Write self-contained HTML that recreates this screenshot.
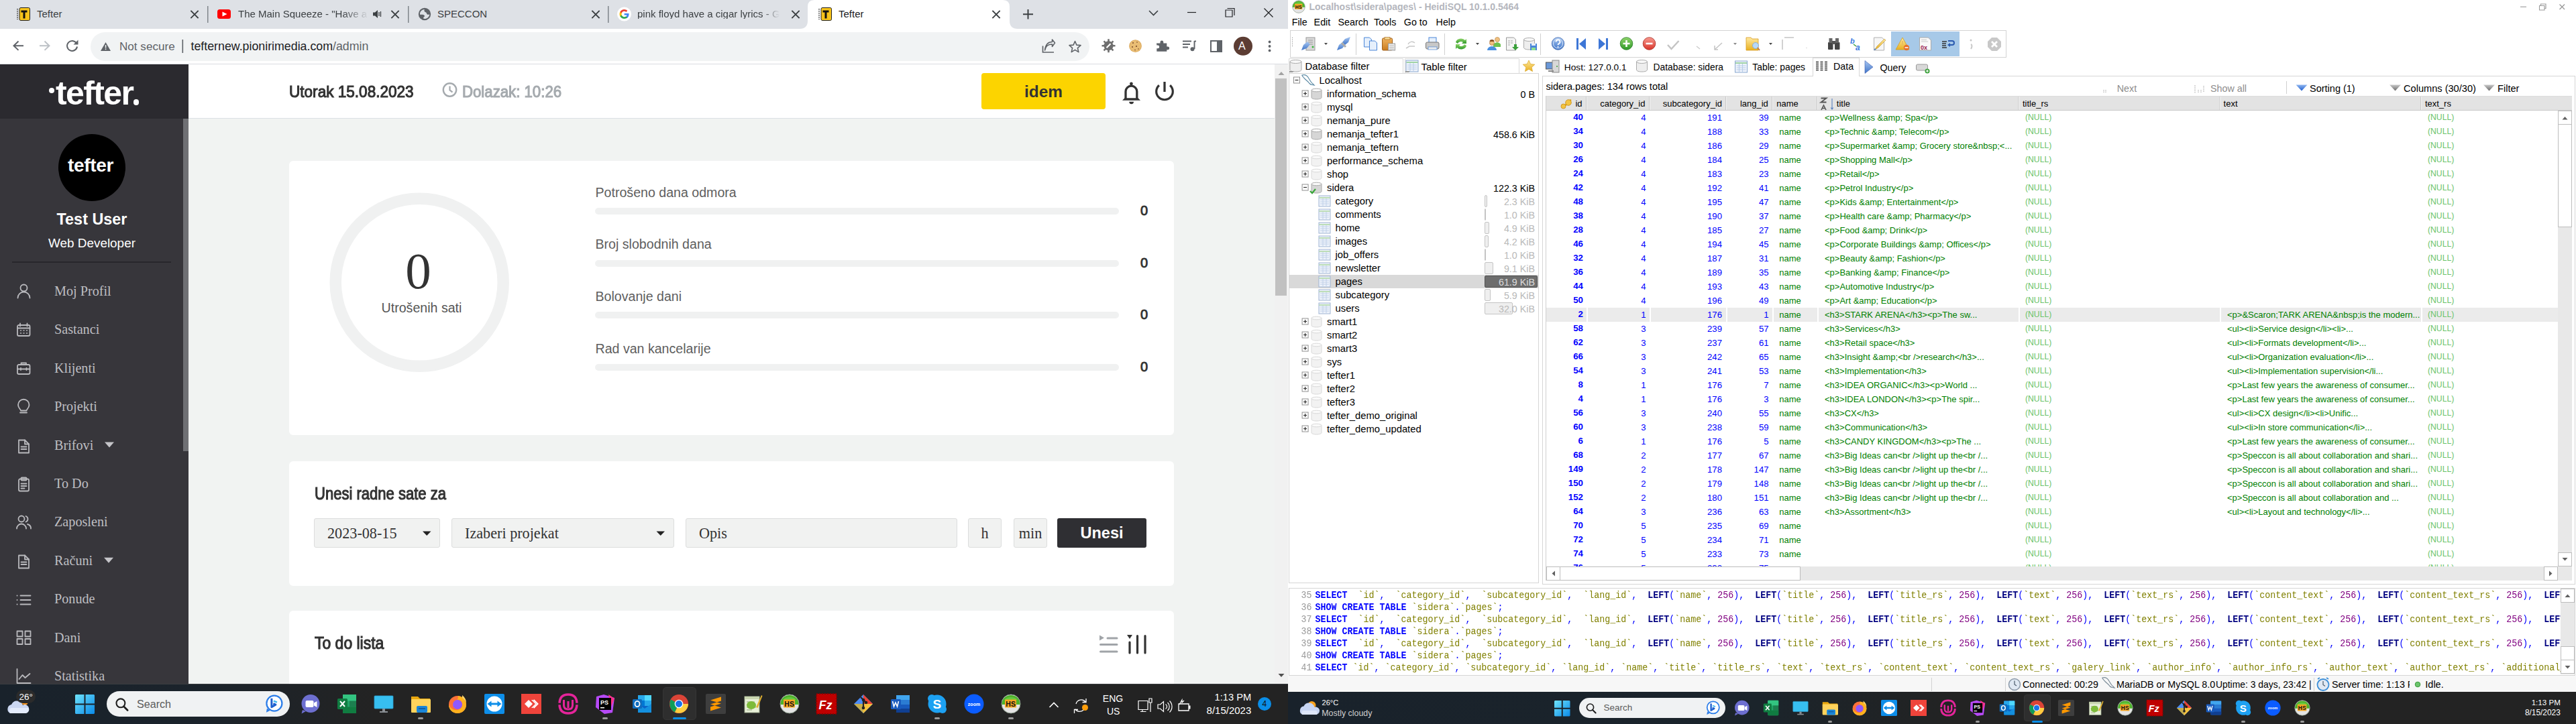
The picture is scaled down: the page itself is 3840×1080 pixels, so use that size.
<!DOCTYPE html>
<html><head><meta charset="utf-8">
<style>
*{box-sizing:border-box;margin:0;padding:0}
html,body{width:3840px;height:1080px;overflow:hidden;background:#fff}
body{position:relative;font-family:"Liberation Sans",sans-serif;color:#222}
.a{position:absolute}
.t{position:absolute;white-space:nowrap;line-height:1}
svg{position:absolute;overflow:visible}
</style></head><body>

<!-- ============ LEFT MONITOR: CHROME ============ -->
<div class="a" style="left:0px;top:0px;width:1920px;height:43px;background:#dee1e6;"></div>
<div class="a" style="left:0px;top:43px;width:1920px;height:53px;background:#fff;border-bottom:1px solid #dadce0"></div>
<div class="a" style="left:135px;top:48px;width:1489px;height:43px;background:#f1f3f4;border-radius:22px"></div>
<!-- tabs -->
<svg style="left:0;top:0" width="1920" height="43">
  <!-- active tab shape -->
  <path d="M1192 43 Q1204 43 1204 31 L1204 10 Q1204 0 1214 0 L1495 0 Q1505 0 1505 10 L1505 31 Q1505 43 1517 43 Z" fill="#fff"/>
  <!-- separators -->
  <rect x="309" y="9" width="1.5" height="25" fill="#80868b"/>
  <rect x="608" y="9" width="1.5" height="25" fill="#80868b"/>
  <rect x="906" y="9" width="1.5" height="25" fill="#80868b"/>
  <!-- close X icons -->
  <g stroke="#3c4043" stroke-width="1.8" stroke-linecap="square">
    <path d="M285 16.5 L295 26.5 M295 16.5 L285 26.5"/>
    <path d="M584 16.5 L594 26.5 M594 16.5 L584 26.5"/>
    <path d="M883 16.5 L893 26.5 M893 16.5 L883 26.5"/>
    <path d="M1181 16.5 L1191 26.5 M1191 16.5 L1181 26.5"/>
    <path d="M1480 16.5 L1490 26.5 M1490 16.5 L1480 26.5"/>
  </g>
  <!-- tefter favicons -->
  <g id="tf">
    <rect x="29" y="11.5" width="15.5" height="19" rx="2" fill="#f6c31b" stroke="#222" stroke-width="1"/>
    <path d="M26 13v16" stroke="#222" stroke-width="1.4" stroke-dasharray="1.5 1.5"/>
    <path d="M31.5 15.5h9v3h-3v9h-3v-9h-3z" fill="#111"/>
  </g>
  <use href="#tf" x="1195"/>
  <!-- youtube -->
  <rect x="324" y="14" width="20" height="14" rx="3.5" fill="#f00"/>
  <path d="M331.5 17.5 L338.5 21 L331.5 24.5Z" fill="#fff"/>
  <!-- speaker -->
  <path d="M556 18.5h3l4-3.5v12l-4-3.5h-3z" fill="#3c4043"/>
  <path d="M565 18v6M567.5 17v8" stroke="#3c4043" stroke-width="1.3"/>
  <!-- globe -->
  <circle cx="633" cy="21" r="9.2" fill="#5f6368"/>
  <path d="M626 21.8C625.6 17.5 628.5 14 632.8 13.9C631.8 15.6 632.6 17.6 634.6 18.3C636.4 19 635.6 20.8 637 21.6C638.2 22.2 639.6 21.6 640.3 21.2C640 24.6 637.6 27.2 634.6 27.9C632.6 28.2 630.8 27.6 631.1 26.4C631.4 25.4 633.2 25 632.9 23.5C632.5 22 630 21.7 626 21.8Z" fill="#dee1e6"/>
  <!-- google G -->
  <circle cx="930.5" cy="21" r="10.5" fill="#fff"/>
  <path d="M937.5 21.3c0-.5 0-1-.1-1.4h-6.8v2.7h3.9c-.2.9-.7 1.7-1.4 2.2v1.8h2.3c1.3-1.2 2.1-3 2.1-5.3z" fill="#4285f4"/>
  <path d="M930.6 28c1.9 0 3.5-.6 4.7-1.7l-2.3-1.8c-.6.4-1.4.7-2.4.7-1.8 0-3.4-1.2-3.9-2.9h-2.4v1.9c1.2 2.3 3.6 3.8 6.3 3.8z" fill="#34a853"/>
  <path d="M926.7 22.3c-.1-.4-.2-.9-.2-1.3s.1-.9.2-1.3v-1.9h-2.4c-.5 1-.8 2.1-.8 3.2s.3 2.2.8 3.2z" fill="#fbbc05"/>
  <path d="M930.6 16.8c1 0 2 .4 2.7 1.1l2-2c-1.3-1.2-3-1.9-4.7-1.9-2.7 0-5.1 1.5-6.3 3.8l2.4 1.9c.5-1.7 2.1-2.9 3.9-2.9z" fill="#ea4335"/>
  <!-- plus -->
  <path d="M1532.5 14v14.5M1525 21.25h15" stroke="#3c4043" stroke-width="2"/>
  <!-- dropdown chevron -->
  <path d="M1713 16l6.5 6.5 6.5-6.5" stroke="#3c4043" stroke-width="1.6" fill="none"/>
  <!-- minimize -->
  <path d="M1770 18.5h13" stroke="#202124" stroke-width="1.2"/>
  <!-- restore -->
  <path d="M1827 15h10v10h-10z" stroke="#202124" stroke-width="1.2" fill="none"/>
  <path d="M1829.5 12.5h10.5v10.5" stroke="#202124" stroke-width="1.2" fill="none"/>
  <!-- close -->
  <path d="M1884.5 12.5l13 13M1897.5 12.5l-13 13" stroke="#202124" stroke-width="1.3"/>
</svg>
<div class="t" style="left:55px;top:12.5px;font-size:15px;color:#3c4043">Tefter</div>
<div class="t" style="left:355px;top:12.5px;font-size:15px;color:#3c4043;width:195px;overflow:hidden;-webkit-mask-image:linear-gradient(90deg,#000 80%,transparent)">The Main Squeeze - "Have a Cigar"</div>
<div class="t" style="left:652px;top:12.5px;font-size:15px;color:#3c4043">SPECCON</div>
<div class="t" style="left:950px;top:12.5px;font-size:15px;color:#3c4043;width:212px;overflow:hidden;-webkit-mask-image:linear-gradient(90deg,#000 88%,transparent)">pink floyd have a cigar lyrics - Google Search</div>
<div class="t" style="left:1250px;top:12.5px;font-size:15px;color:#202124">Tefter</div>

<!-- toolbar icons -->
<svg style="left:0;top:43px" width="1920" height="53">
  <!-- back -->
  <path d="M35 25.2H21.5M27.5 18.5l-7 6.7 7 6.7" stroke="#5f6368" stroke-width="2" fill="none"/>
  <!-- forward -->
  <path d="M59 25.2h13.5M66.5 18.5l7 6.7-7 6.7" stroke="#bdc1c6" stroke-width="2" fill="none"/>
  <!-- reload -->
  <path d="M114 21.5a7.5 7.5 0 1 0 1 5" stroke="#5f6368" stroke-width="2" fill="none"/>
  <path d="M116.5 16.5v7h-7z" fill="#5f6368"/>
  <!-- warning -->
  <path d="M157.5 20L165 33H150Z" fill="#5f6368"/>
  <rect x="156.8" y="24" width="1.5" height="4.5" fill="#f1f3f4"/>
  <rect x="156.8" y="29.5" width="1.5" height="1.6" fill="#f1f3f4"/>
  <rect x="271.5" y="16" width="1.6" height="20" fill="#5f6368"/>
  <!-- share -->
  <path d="M1554.5 25.5v9.5h16.5" stroke="#5f6368" stroke-width="1.7" fill="none"/>
  <path d="M1557.5 32c1-6 5-9 11-9v3.5l4-5.5-4-5v3.5c-6 0-10 4-11 12.5z" stroke="#5f6368" stroke-width="1.6" fill="none" stroke-linejoin="round"/>
  <!-- star -->
  <path d="M1602.5 18.5l2.4 5.6 6.1.5-4.6 4 1.4 6-5.3-3.2-5.3 3.2 1.4-6-4.6-4 6.1-.5z" stroke="#5f6368" stroke-width="1.6" fill="none" stroke-linejoin="round"/>
  <!-- bug/gear ext -->
  <g transform="translate(1652.5 25.3)">
    <circle r="7" fill="#6e6e6e"/>
    <g stroke="#6e6e6e" stroke-width="2.6">
      <path d="M0 -10v20M-10 0h20M-7 -7l14 14M7 -7l-14 14"/>
    </g>
    <path d="M-3 3l6-6" stroke="#fff" stroke-width="2.2"/>
  </g>
  <!-- cookie -->
  <circle cx="1692.5" cy="25.7" r="9.4" fill="#dcaa5f"/>
  <circle cx="1692.5" cy="25.7" r="8.4" fill="#e9bd74"/>
  <g fill="#6b3b1f"><circle cx="1689" cy="21" r=".9"/><circle cx="1695" cy="20" r=".8"/><circle cx="1688" cy="27" r=".9"/><circle cx="1694" cy="26" r="1"/><circle cx="1697" cy="30" r=".8"/><circle cx="1692" cy="31.5" r=".8"/></g>
  <!-- puzzle -->
  <path d="M1724 21.5h5.5v-1.5a2.4 2.4 0 0 1 4.8 0v1.5h5v5h1.5a2.4 2.4 0 0 1 0 4.8h-1.5v2.5h-15v-4.5h1.5a2.4 2.4 0 0 0 0-4.8h-1.5z" fill="#5f6368"/>
  <!-- media -->
  <g stroke="#5f6368" stroke-width="1.9"><path d="M1763 18.5h13M1763 23h11M1763 27.5h8M1780.5 18v12"/></g>
  <path d="M1780.5 18.5h2.5" stroke="#5f6368" stroke-width="1.9"/>
  <circle cx="1777.5" cy="30.3" r="3" fill="#5f6368"/>
  <!-- side panel -->
  <rect x="1805" y="18" width="16" height="16" fill="none" stroke="#5f6368" stroke-width="2"/>
  <rect x="1814" y="18" width="7" height="16" fill="#5f6368"/>
  <!-- avatar -->
  <circle cx="1853" cy="25.8" r="14" fill="#5c3d33"/>
  <!-- kebab -->
  <circle cx="1892.6" cy="19.5" r="1.9" fill="#5f6368"/><circle cx="1892.6" cy="26" r="1.9" fill="#5f6368"/><circle cx="1892.6" cy="32.4" r="1.9" fill="#5f6368"/>
</svg>
<div class="t" style="left:1846px;top:61px;font-size:16px;color:#fff">A</div>
<div class="t" style="left:178px;top:61px;font-size:17.1px;color:#5f6368">Not secure</div>
<div class="t" style="left:284.5px;top:61px;font-size:17.8px;color:#202124">tefternew.pionirimedia.com<span style="color:#5f6368">/admin</span></div>

<!-- sidebar -->
<div class="a" style="left:0px;top:96px;width:281px;height:81px;background:#2b2a2f;"></div>
<div class="a" style="left:0px;top:177px;width:281px;height:843px;background:#37363b;"></div>
<div class="a" style="left:273px;top:177px;width:8px;height:496px;background:#6f7074;"></div>
<div class="t" style="top:114.17px;font-size:50px;color:#fff;font-weight:bold;left:73.00px;letter-spacing:-1.6px;"><span style="display:inline-block;width:8px;height:8px;border-radius:50%;background:#fff;vertical-align:17px;margin-right:2px"></span>tefter</div>
<div class="a" style="left:198.5px;top:148px;width:8.5px;height:8.5px;background:#fff;border-radius:50%"></div>
<div class="a" style="left:87px;top:200px;width:100px;height:100px;background:#000;border-radius:50%"></div>
<div class="t" style="top:233.30px;font-size:28px;color:#fff;font-weight:bold;left:101.00px;letter-spacing:-0.3px;">tefter</div>
<div class="t" style="top:316.19px;font-size:23.4px;color:#fff;font-weight:bold;left:137.00px;transform:translateX(-50%);">Test User</div>
<div class="t" style="top:353.50px;font-size:18.9px;color:#fff;left:137.00px;transform:translateX(-50%);">Web Developer</div>
<div class="a" style="left:18px;top:390px;width:237px;height:2px;background:#28272b;"></div>
<div class="t" style="top:423.78px;font-size:20.2px;color:#bebec2;font-family:'Liberation Serif',serif;left:81.00px;">Moj Profil</div>
<div class="t" style="top:481.23px;font-size:20.2px;color:#bebec2;font-family:'Liberation Serif',serif;left:81.00px;">Sastanci</div>
<div class="t" style="top:538.68px;font-size:20.2px;color:#bebec2;font-family:'Liberation Serif',serif;left:81.00px;">Klijenti</div>
<div class="t" style="top:596.13px;font-size:20.2px;color:#bebec2;font-family:'Liberation Serif',serif;left:81.00px;">Projekti</div>
<div class="t" style="top:653.58px;font-size:20.2px;color:#bebec2;font-family:'Liberation Serif',serif;left:81.00px;">Brifovi</div>
<div class="t" style="top:711.03px;font-size:20.2px;color:#bebec2;font-family:'Liberation Serif',serif;left:81.00px;">To Do</div>
<div class="t" style="top:768.48px;font-size:20.2px;color:#bebec2;font-family:'Liberation Serif',serif;left:81.00px;">Zaposleni</div>
<div class="t" style="top:825.93px;font-size:20.2px;color:#bebec2;font-family:'Liberation Serif',serif;left:81.00px;">Računi</div>
<div class="t" style="top:883.38px;font-size:20.2px;color:#bebec2;font-family:'Liberation Serif',serif;left:81.00px;">Ponude</div>
<div class="t" style="top:940.83px;font-size:20.2px;color:#bebec2;font-family:'Liberation Serif',serif;left:81.00px;">Dani</div>
<div class="t" style="top:998.28px;font-size:20.2px;color:#bebec2;font-family:'Liberation Serif',serif;left:81.00px;">Statistika</div>
<svg style="left:0;top:0" width="1" height="1"><path d="M156 659.5h14l-7 8z" fill="#c5c5c9"/></svg>
<svg style="left:0;top:0" width="1" height="1"><path d="M155 831.85h14l-7 8z" fill="#c5c5c9"/></svg>
<svg style="left:0;top:424.0px" width="60" height="24"><g fill="none" stroke="#b9b9bd" stroke-width="1.8" stroke-linecap="round" stroke-linejoin="round"><circle cx="35.5" cy="5.5" r="5"/><path d="M26.5 20.5a9 9 0 0 1 18 0"/></g></svg>
<svg style="left:0;top:481.4px" width="60" height="24"><g fill="none" stroke="#b9b9bd" stroke-width="1.8" stroke-linecap="round" stroke-linejoin="round"><rect x="26" y="4" width="18.5" height="16" rx="2"/><path d="M26 8.5h18.5M30 1.5v4M40.5 1.5v4"/><g stroke-width="1.5"><path d="M30.5 12h1M35 12h1M39.5 12h1M30.5 16h1M35 16h1M39.5 16h1"/></g></g></svg>
<svg style="left:0;top:538.9px" width="60" height="24"><g fill="none" stroke="#b9b9bd" stroke-width="1.8" stroke-linecap="round" stroke-linejoin="round"><rect x="26" y="5" width="18.5" height="14" rx="2"/><path d="M31.5 5V2.5h7.5V5M26 11.5h18.5M31 10v3M39.5 10v3"/></g></svg>
<svg style="left:0;top:596.4px" width="60" height="24"><g fill="none" stroke="#b9b9bd" stroke-width="1.8" stroke-linecap="round" stroke-linejoin="round"><path d="M30 19.5h10M31 16.5c0-2-4-4-4-8.5a8.2 8.2 0 0 1 16.5 0c0 4.5-4 6.5-4 8.5z"/></g></svg>
<svg style="left:0;top:653.8px" width="60" height="24"><g fill="none" stroke="#b9b9bd" stroke-width="1.8" stroke-linecap="round" stroke-linejoin="round"><path d="M28 2.5h9l6 6v13h-15z"/><path d="M37 2.5v6h6M31.5 12.5h8M31.5 16h8"/></g></svg>
<svg style="left:0;top:711.2px" width="60" height="24"><g fill="none" stroke="#b9b9bd" stroke-width="1.8" stroke-linecap="round" stroke-linejoin="round"><rect x="28" y="3.5" width="15" height="18" rx="2"/><rect x="31.5" y="1.5" width="8" height="4" rx="1"/><path d="M31.5 10.5h8M31.5 14h8M31.5 17.5h5"/></g></svg>
<svg style="left:0;top:768.7px" width="60" height="24"><g fill="none" stroke="#b9b9bd" stroke-width="1.8" stroke-linecap="round" stroke-linejoin="round"><circle cx="32" cy="5" r="4.5"/><path d="M25 19.5a7 7 0 0 1 14 0M38.5 1a4.5 4.5 0 0 1 0 8.5M41 13a6.5 6.5 0 0 1 5 6.5"/></g></svg>
<svg style="left:0;top:826.2px" width="60" height="24"><g fill="none" stroke="#b9b9bd" stroke-width="1.8" stroke-linecap="round" stroke-linejoin="round"><path d="M28 2.5h9l6 6v13h-15z"/><path d="M37 2.5v6h6M31.5 12.5h8M31.5 16h8"/></g></svg>
<svg style="left:0;top:883.6px" width="60" height="24"><g fill="none" stroke="#b9b9bd" stroke-width="1.8" stroke-linecap="round" stroke-linejoin="round"><path d="M30.5 4.5h15M30.5 11h15M30.5 17.5h15M25.5 4.5h.1M25.5 11h.1M25.5 17.5h.1"/></g></svg>
<svg style="left:0;top:941.1px" width="60" height="24"><g fill="none" stroke="#b9b9bd" stroke-width="1.8" stroke-linecap="round" stroke-linejoin="round"><rect x="25.5" y="0.5" width="8" height="8"/><rect x="37.5" y="0.5" width="8" height="8"/><rect x="25.5" y="12" width="8" height="8"/><rect x="37.5" y="12" width="8" height="8"/></g></svg>
<svg style="left:0;top:998.5px" width="60" height="24"><g fill="none" stroke="#b9b9bd" stroke-width="1.8" stroke-linecap="round" stroke-linejoin="round"><path d="M25.5 -1v21h20M28.5 14l5-6 4 4 7-6"/></g></svg>
<!-- content -->
<div class="a" style="left:281px;top:96px;width:1619px;height:80px;background:#fff;"></div>
<div class="a" style="left:281px;top:176px;width:1619px;height:1px;background:#dce0e4;"></div>
<div class="a" style="left:281px;top:177px;width:1619px;height:843px;background:#f1f3f2;"></div>
<div class="t" style="top:124.76px;font-size:24.5px;color:#333;left:431.00px;transform:scaleX(0.921);transform-origin:left;-webkit-text-stroke:1.1px #333;">Utorak 15.08.2023</div>
<svg style="left:659px;top:122px" width="24" height="24"><circle cx="11.5" cy="12" r="9.7" fill="none" stroke="#a5aaae" stroke-width="2.4"/><path d="M11.5 6.5v6l4 3" fill="none" stroke="#a5aaae" stroke-width="2.2"/></svg>
<div class="t" style="top:124.76px;font-size:24.5px;color:#a5aaae;left:688.50px;transform:scaleX(0.906);transform-origin:left;-webkit-text-stroke:1.1px #a5aaae;">Dolazak: 10:26</div>
<div class="a" style="left:1463px;top:109px;width:185px;height:54px;background:#fcd400;border-radius:4px"></div>
<div class="t" style="top:124.85px;font-size:24.4px;color:#333;font-weight:bold;left:1555.50px;transform:translateX(-50%);">idem</div>
<svg style="left:0;top:0" width="1" height="1"><circle cx="1686.4" cy="125" r="2.4" fill="#333"/><path d="M1678 147.5V136.5a8.4 8.4 0 0 1 16.8 0V147.5" fill="none" stroke="#333" stroke-width="3.3"/><path d="M1673 149.8h27l-3.5-3.5h-20z" fill="#333"/><path d="M1683.2 151.8h6.8a3.4 3.4 0 0 1 -6.8 0z" fill="#333"/><path d="M1736 122v15" stroke="#333" stroke-width="3.3"/><path d="M1727.9 127.2a12.3 12.3 0 1 0 16.2 0" fill="none" stroke="#333" stroke-width="3.2"/></svg>
<div class="a" style="left:431px;top:240px;width:1319px;height:409px;background:#fff;border-radius:6px"></div>
<svg style="left:0;top:0" width="1" height="1"><circle cx="625.2" cy="421.3" r="125" fill="none" stroke="#f0f1f1" stroke-width="17.5"/></svg>
<div class="t" style="top:365.51px;font-size:77px;color:#333;font-family:'Liberation Serif',serif;left:623.50px;transform:translateX(-50%);">0</div>
<div class="t" style="top:450.41px;font-size:19.6px;color:#555;left:628.50px;transform:translateX(-50%);">Utrošenih sati</div>
<div class="t" style="top:277.81px;font-size:19.6px;color:#5e5e5e;left:887.50px;">Potrošeno dana odmora</div>
<div class="a" style="left:887px;top:310px;width:781px;height:10px;background:#f0f1f1;border-radius:5px"></div>
<div class="t" style="top:304.07px;font-size:20px;color:#333;left:1705.50px;transform:translateX(-50%);-webkit-text-stroke:0.9px #333;">0</div>
<div class="t" style="top:355.41px;font-size:19.6px;color:#5e5e5e;left:887.50px;">Broj slobodnih dana</div>
<div class="a" style="left:887px;top:388px;width:781px;height:10px;background:#f0f1f1;border-radius:5px"></div>
<div class="t" style="top:381.67px;font-size:20px;color:#333;left:1705.50px;transform:translateX(-50%);-webkit-text-stroke:0.9px #333;">0</div>
<div class="t" style="top:433.01px;font-size:19.6px;color:#5e5e5e;left:887.50px;">Bolovanje dani</div>
<div class="a" style="left:887px;top:465px;width:781px;height:10px;background:#f0f1f1;border-radius:5px"></div>
<div class="t" style="top:459.27px;font-size:20px;color:#333;left:1705.50px;transform:translateX(-50%);-webkit-text-stroke:0.9px #333;">0</div>
<div class="t" style="top:510.61px;font-size:19.6px;color:#5e5e5e;left:887.50px;">Rad van kancelarije</div>
<div class="a" style="left:887px;top:543px;width:781px;height:10px;background:#f0f1f1;border-radius:5px"></div>
<div class="t" style="top:536.87px;font-size:20px;color:#333;left:1705.50px;transform:translateX(-50%);-webkit-text-stroke:0.9px #333;">0</div>
<div class="a" style="left:431px;top:688px;width:1319px;height:186px;background:#fff;border-radius:6px"></div>
<div class="t" style="top:723.84px;font-size:25px;color:#333;left:468.80px;transform:scaleX(0.881);transform-origin:left;-webkit-text-stroke:1.1px #333;">Unesi radne sate za</div>
<div class="a" style="left:468px;top:773px;width:188px;height:44px;background:#f1f2f1;border:1px solid #dcdddd;border-radius:3px"></div>
<div class="t" style="top:785.41px;font-size:22.2px;color:#333;font-family:'Liberation Serif',serif;left:488.00px;">2023-08-15</div>
<svg style="left:0;top:0" width="1" height="1"><path d="M630 792.5h12.5l-6.25 6.5z" fill="#222"/></svg>
<div class="a" style="left:673px;top:773px;width:332px;height:44px;background:#f1f2f1;border:1px solid #dcdddd;border-radius:3px"></div>
<div class="t" style="top:785.41px;font-size:22.2px;color:#333;font-family:'Liberation Serif',serif;left:693.00px;">Izaberi projekat</div>
<svg style="left:0;top:0" width="1" height="1"><path d="M978.5 792.5h12.5l-6.25 6.5z" fill="#222"/></svg>
<div class="a" style="left:1022px;top:773px;width:405px;height:44px;background:#f1f2f1;border:1px solid #dcdddd;border-radius:3px"></div>
<div class="t" style="top:785.41px;font-size:22.2px;color:#333;font-family:'Liberation Serif',serif;left:1042.00px;">Opis</div>
<div class="a" style="left:1443px;top:773px;width:50px;height:44px;background:#f1f2f1;border:1px solid #dcdddd;border-radius:3px"></div>
<div class="t" style="top:785.41px;font-size:22.2px;color:#333;font-family:'Liberation Serif',serif;left:1468.00px;transform:translateX(-50%);">h</div>
<div class="a" style="left:1511px;top:773px;width:50px;height:44px;background:#f1f2f1;border:1px solid #dcdddd;border-radius:3px"></div>
<div class="t" style="top:785.41px;font-size:22.2px;color:#333;font-family:'Liberation Serif',serif;left:1536.00px;transform:translateX(-50%);">min</div>
<div class="a" style="left:1576px;top:773px;width:133px;height:44px;background:#2f2f33;border-radius:3px"></div>
<div class="t" style="top:784.41px;font-size:23.5px;color:#fff;font-weight:bold;left:1642.50px;transform:translateX(-50%);">Unesi</div>
<div class="a" style="left:431px;top:911px;width:1319px;height:120px;background:#fff;border-radius:6px"></div>
<div class="t" style="top:947.44px;font-size:25px;color:#333;left:468.80px;transform:scaleX(0.918);transform-origin:left;-webkit-text-stroke:1.1px #333;">To do lista</div>
<svg style="left:1638px;top:946px" width="80" height="32"><path d="M1 1.5l7 4-7 4z" fill="#a0a4a8"/><g stroke="#a0a4a8" stroke-width="3" stroke-linecap="round"><path d="M13 6h14M2.5 15.5h24.5M2.5 26h24.5"/></g><path d="M42 1h8l-4 6z" fill="#333"/><g stroke="#333" stroke-width="3.2" stroke-linecap="round"><path d="M46 12v16M57.5 2.5v25.5M69 2.5v25.5"/></g></svg>
<div class="a" style="left:1900px;top:96px;width:20px;height:924px;background:#f1f1f1;"></div>
<div class="a" style="left:1901px;top:117px;width:17px;height:324px;background:#c1c1c1;"></div>
<svg style="left:0;top:0" width="1" height="1"><path d="M1905.5 112h9l-4.5-5z" fill="#a3a3a3"/><path d="M1905.5 1005h9l-4.5 5z" fill="#505050"/></svg>
<!-- taskbar left -->
<div class="a" style="left:0px;top:1020px;width:1920px;height:60px;background:linear-gradient(90deg,#19222b 0,#1b232b 300px,#232323 560px,#232323 100%);"></div>
<div class="a" style="left:0px;top:1020px;width:1920px;height:1px;background:#3a3d40;"></div>
<svg style="left:0;top:1020px" width="60" height="60"><circle cx="37" cy="27" r="5" fill="#f7941d"/><path d="M15 44a7 7 0 0 1 2-13 9 9 0 0 1 17 1 6 6 0 0 1 9 6 6 6 0 0 1-5 6z" fill="#cbd7f2"/><path d="M15 44a7 7 0 0 1 1-8h27a6 6 0 0 1-5 8z" fill="#e3ebfb"/></svg>
<div class="a" style="left:24px;top:1029px;width:29px;height:20px;background:#2b2b2b;border-radius:10px"></div>
<div class="t" style="top:1032.87px;font-size:13.5px;color:#fff;left:28.50px;">26°</div>
<svg style="left:112px;top:1036px" width="29" height="29"><defs><linearGradient id="wg112" x1="0" y1="0" x2="1" y2="1"><stop offset="0" stop-color="#6ee3fb"/><stop offset="1" stop-color="#0b8ae8"/></linearGradient></defs><path d="M1 0h12.5v13.5H0V1z M15.5 0h12.5l1 1v12.5h-13.5z M0 15.5h13.5v13.5H1l-1-1z M15.5 15.5h13.5v12.5l-1 1h-12.5z" fill="url(#wg112)"/></svg>
<div class="a" style="left:159px;top:1031px;width:273px;height:38px;border-radius:19.0px;background:#f0f2f3"></div>
<svg style="left:159px;top:1031px" width="273" height="38"><circle cx="20.900000000000002" cy="17.86" r="6.460000000000001" fill="none" stroke="#1f1f1f" stroke-width="2.09"/><path d="M25.46 22.8l5.7 5.7" stroke="#1f1f1f" stroke-width="2.66" stroke-linecap="round"/><g transform="translate(236.9 5.7) scale(1.0)"><circle cx="13" cy="12.5" r="11.5" fill="#fff" stroke="#2b7de9" stroke-width="2.2"/><path d="M2 20l-1 6 6-3" fill="#2b7de9"/><path d="M9 5v13l6-3.5-3.5-1.5" fill="none" stroke="#1d5fcf" stroke-width="3" stroke-linejoin="round"/><path d="M12 9l5 2" stroke="#3fb8f0" stroke-width="2.5"/></g></svg>
<div class="t" style="left:204px;top:1042.0px;font-size:16.1px;color:#5b5b5b">Search</div>
<div class="a" style="left:988px;top:1025px;width:50px;height:49px;background:#2e2e2e;border-radius:5px;border:1px solid #363636"></div>
<svg style="left:447.0px;top:1035px" width="30" height="30"><g transform="scale(1.0000)"><circle cx="16" cy="14.5" r="13.5" fill="#6d6fd0"/><path d="M4 24 L2.5 29.5 L9 26Z" fill="#6d6fd0"/><rect x="8.5" y="10" width="12" height="10" rx="2" fill="#fff"/><path d="M21 13.5l4.5-2.5v9l-4.5-2.5z" fill="#fff"/></g></svg>
<svg style="left:502.0px;top:1035px" width="30" height="30"><g transform="scale(1.0000)"><rect x="9" y="1" width="20" height="28" rx="2" fill="#21a366"/><rect x="9" y="1" width="20" height="9.5" fill="#33c481"/><rect x="9" y="19.5" width="20" height="9.5" fill="#107c41"/><rect x="19" y="10.5" width="10" height="9" fill="#185c37" opacity=".5"/><rect x="1" y="7" width="15" height="16" rx="1.5" fill="#107c41"/><path d="M5 11l7 8M12 11l-7 8" stroke="#fff" stroke-width="2"/></g></svg>
<svg style="left:557.0px;top:1035px" width="30" height="30"><g transform="scale(1.0000)"><rect x="1" y="3" width="28" height="19" rx="1" fill="#37bff0"/><rect x="1" y="3" width="28" height="19" rx="1" fill="none" stroke="#2a9fd0" stroke-width=".8"/><rect x="13" y="22" width="4" height="4" fill="#8a8f94"/><rect x="9" y="26" width="12" height="2" fill="#8a8f94"/></g></svg>
<svg style="left:612.0px;top:1035px" width="30" height="30"><g transform="scale(1.0000)"><path d="M1 4h10l3 3h15v20H1z" fill="#e8a70e"/><rect x="1" y="8" width="29" height="20" rx="1" fill="#ffd35c"/><rect x="9" y="18" width="16" height="10" rx="2" fill="#1a86d8"/><rect x="12" y="21" width="10" height="2" fill="#0f5fa8"/></g></svg>
<svg style="left:667.0px;top:1035px" width="30" height="30"><g transform="scale(1.0000)"><circle cx="15" cy="16" r="13" fill="#ff7139"/><path d="M15 3c6 0 13 5 13 13S22 29 15 29C8 29 2 24 2 16c2 6 8 9 13 8 5-1 8-5 7-10-1-4-5-6-8-5 3-3 2-6 1-6z" fill="#ffb21e"/><circle cx="15" cy="16" r="7" fill="#9059ff"/><path d="M22 2c4 3 6 7 6 11-2-4-4-6-6-7z" fill="#ffd567"/></g></svg>
<svg style="left:722.0px;top:1035px" width="30" height="30"><g transform="scale(1.0000)"><rect x="0" y="0" width="30" height="30" rx="2" fill="#0e8ee9"/><circle cx="15" cy="15" r="11.5" fill="#fff"/><path d="M4.5 15l6-4.5v3h9v-3l6 4.5-6 4.5v-3h-9v3z" fill="#0e8ee9"/></g></svg>
<svg style="left:777.0px;top:1035px" width="30" height="30"><g transform="scale(1.0000)"><rect x="0" y="0" width="30" height="30" fill="#ef443b"/><path d="M5 15l6-6 6 6-6 6z" fill="#fff"/><path d="M15 9l6 6-6 6 2 0 6-6-6-6z" fill="#fff"/><path d="M18.5 9l6 6-6 6" fill="none" stroke="#fff" stroke-width="2"/></g></svg>
<svg style="left:832.0px;top:1035px" width="30" height="30"><g transform="scale(1.0000)"><path d="M15 1c8 0 13 4 13 14s-5 14-13 14S2 25 2 15 7 1 15 1z" fill="none" stroke="#e5249a" stroke-width="3.5"/><path d="M8.5 9v8c0 4 2.5 6 6.5 6s6.5-2 6.5-6V9M15 11v10" fill="none" stroke="#e5249a" stroke-width="3"/><path d="M0 15h6M24 15h6" stroke="#232323" stroke-width="2.5"/></g></svg>
<svg style="left:887.0px;top:1035px" width="30" height="30"><g transform="scale(1.0000)"><path d="M2 4l11-3 16 5-3 22-12 2L1 20z" fill="#b74af7"/><path d="M20 1l9 6-5 12z" fill="#ff318c"/><rect x="6" y="6" width="18" height="18" fill="#000"/><text x="8" y="16" font-family="Liberation Sans" font-weight="bold" font-size="9" fill="#fff">PS</text><rect x="8" y="20" width="6" height="1.5" fill="#fff"/></g></svg>
<svg style="left:942.0px;top:1035px" width="30" height="30"><g transform="scale(1.0000)"><rect x="9" y="2" width="20" height="26" rx="2" fill="#0a64c8"/><rect x="9" y="2" width="20" height="8" fill="#28a8ea"/><rect x="19" y="2" width="10" height="8" fill="#50d9ff"/><rect x="9" y="10" width="10" height="8" fill="#0078d4"/><rect x="19" y="10" width="10" height="8" fill="#28a8ea"/><path d="M9 15l10 7 10-7v13H9z" fill="#1490df"/><rect x="1" y="8" width="14" height="14" rx="1.5" fill="#0f6cbd"/><ellipse cx="8" cy="15" rx="3.5" ry="4.2" fill="none" stroke="#fff" stroke-width="1.8"/></g></svg>
<svg style="left:997.0px;top:1035px" width="30" height="30"><g transform="scale(1.0000)"><circle cx="15" cy="15" r="14" fill="#db4437"/><path d="M15 15L3 8.5A14 14 0 0 0 9 27.5z" fill="#0f9d58"/><path d="M15 15h14A14 14 0 0 1 9 27.5z" fill="#ffcd40"/><path d="M15 15L3 8.5" stroke="#0f9d58" stroke-width="0"/><circle cx="15" cy="15" r="6.3" fill="#fff"/><circle cx="15" cy="15" r="5" fill="#1a73e8"/></g></svg>
<svg style="left:1052.0px;top:1035px" width="30" height="30"><g transform="scale(1.0000)"><rect x="0" y="0" width="30" height="30" rx="2" fill="#3e3e3e"/><path d="M7 9.5l16-5v6l-16 5z M7 15.5l16 5v-6l-16-5z M7 19.5l16-5v6l-16 5z" fill="#ff9800"/></g></svg>
<svg style="left:1107.0px;top:1035px" width="30" height="30"><g transform="scale(1.0000)"><rect x="3" y="4" width="22" height="24" fill="#e8f0d8" stroke="#9aa58a" stroke-width="1"/><path d="M3 4h22v4H3z" fill="#c9d6b0"/><path d="M6 12h12M6 16h10M6 20h14M6 24h8" stroke="#8fa37a" stroke-width="1"/><ellipse cx="13" cy="17" rx="7" ry="6" fill="#7dbb3a"/><path d="M20 20L28 2l1.5 1-7 18z" fill="#e0b030"/></g></svg>
<svg style="left:1162.0px;top:1035px" width="30" height="30"><g transform="scale(1.0000)"><circle cx="15" cy="15" r="14" fill="#e4e4e4"/><path d="M1 16a14 14 0 0 1 28 0z" fill="#4db32b"/><path d="M5 9a12 9 0 0 1 20 0" fill="#7dd850" opacity=".6"/><circle cx="15" cy="15" r="14" fill="none" stroke="#8a9a8a" stroke-width="1"/><rect x="6" y="8.5" width="17" height="12" rx="1" fill="#f5a623"/><text x="7.3" y="18.8" font-family="Liberation Sans" font-weight="bold" font-size="10.5" fill="#111">HS</text></g></svg>
<svg style="left:1217.0px;top:1035px" width="30" height="30"><g transform="scale(1.0000)"><rect x="0" y="0" width="30" height="30" fill="#bf0000"/><path d="M0 0h30v30H0z" fill="none" stroke="#8b0000" stroke-width="2" stroke-dasharray="2 2"/><text x="3.5" y="23" font-family="Liberation Sans" font-weight="bold" font-style="italic" font-size="18" fill="#fff">Fz</text></g></svg>
<svg style="left:1272.0px;top:1035px" width="30" height="30"><g transform="scale(1.0000)"><path d="M15 1l14 14-14 14L1 15z" fill="#4b8bf5"/><path d="M15 15h14L15 29z" fill="#f7c23c"/><path d="M15 1l14 14H15z" fill="#ea4335"/><path d="M1 15h14v14z" fill="#fbbc04" opacity=".7"/><path d="M11 5l8 8M15 9v12" stroke="#222" stroke-width="2.2"/><circle cx="15" cy="9" r="2.3" fill="#222"/><circle cx="19" cy="13" r="2.3" fill="#222"/><circle cx="15" cy="21" r="2.3" fill="#222"/></g></svg>
<svg style="left:1327.0px;top:1035px" width="30" height="30"><g transform="scale(1.0000)"><rect x="9" y="2" width="20" height="26" rx="2" fill="#185abd"/><rect x="9" y="2" width="20" height="7" fill="#41a5ee"/><rect x="9" y="9" width="20" height="7" fill="#2b7cd3"/><rect x="9" y="22" width="20" height="6" fill="#103f91"/><rect x="1" y="8" width="15" height="15" rx="1.5" fill="#185abd"/><path d="M3.5 11l2 8 2.5-6 2.5 6 2-8" fill="none" stroke="#fff" stroke-width="1.6"/></g></svg>
<svg style="left:1382.0px;top:1035px" width="30" height="30"><g transform="scale(1.0000)"><circle cx="15" cy="15" r="13.5" fill="#1da1f2"/><circle cx="7" cy="7" r="6" fill="#1da1f2"/><circle cx="23" cy="23" r="6" fill="#1da1f2"/><text x="8.5" y="22" font-family="Liberation Sans" font-weight="bold" font-size="19" fill="#fff">S</text></g></svg>
<svg style="left:1437.0px;top:1035px" width="30" height="30"><g transform="scale(1.0000)"><circle cx="15" cy="15" r="14.5" fill="#0b5cff"/><text x="15" y="17.5" text-anchor="middle" font-family="Liberation Sans" font-weight="bold" font-size="7" fill="#fff">zoom</text></g></svg>
<svg style="left:1492.0px;top:1035px" width="30" height="30"><g transform="scale(1.0000)"><circle cx="15" cy="15" r="14" fill="#e4e4e4"/><path d="M1 16a14 14 0 0 1 28 0z" fill="#4db32b"/><path d="M5 9a12 9 0 0 1 20 0" fill="#7dd850" opacity=".6"/><circle cx="15" cy="15" r="14" fill="none" stroke="#8a9a8a" stroke-width="1"/><rect x="6" y="8.5" width="17" height="12" rx="1" fill="#f5a623"/><text x="7.3" y="18.8" font-family="Liberation Sans" font-weight="bold" font-size="10.5" fill="#111">HS</text></g></svg>
<div class="a" style="left:623px;top:1070px;width:8px;height:3px;background:#9a9a9a;border-radius:2px"></div>
<div class="a" style="left:898px;top:1070px;width:8px;height:3px;background:#9a9a9a;border-radius:2px"></div>
<div class="a" style="left:1393px;top:1070px;width:8px;height:3px;background:#9a9a9a;border-radius:2px"></div>
<div class="a" style="left:1503px;top:1070px;width:8px;height:3px;background:#9a9a9a;border-radius:2px"></div>
<div class="a" style="left:1003px;top:1070px;width:20px;height:3px;background:#0a8ee8;border-radius:2px"></div>
<svg style="left:0;top:1020px" width="1920" height="60"><path d="M1564.5 35l6.5-6.5 6.5 6.5" fill="none" stroke="#fff" stroke-width="1.6"/><path d="M1618 27a8 8 0 0 0-14 3M1603 38a8 8 0 0 0 14-2" fill="none" stroke="#fff" stroke-width="1.3"/><path d="M1619 22v5.5h-5.5" fill="none" stroke="#fff" stroke-width="1.3"/><path d="M1601.5 44v-5.5h5.5" fill="none" stroke="#fff" stroke-width="1.3"/><circle cx="1617.5" cy="35.5" r="4.5" fill="#ff9d0a"/><path d="M1697 25.5h14v13h-14zM1703 38.5v3h-3M1703.5 41.5h5" fill="none" stroke="#fff" stroke-width="1.2"/><path d="M1713 22h4v6h-4zM1715 28v14" fill="none" stroke="#fff" stroke-width="1.2"/><path d="M1726 31h3.5l5-4.5v15l-5-4.5h-3.5z" fill="none" stroke="#fff" stroke-width="1.2"/><path d="M1737.5 30.5a4 4 0 0 1 0 7M1740.5 28a8 8 0 0 1 0 12M1743.5 25.5a12 12 0 0 1 0 17" fill="none" stroke="#fff" stroke-width="1.2"/><path d="M1757 30h15v10h-15z" fill="none" stroke="#fff" stroke-width="1.3"/><rect x="1772" y="32.5" width="2.5" height="5" fill="#fff"/><path d="M1758 31l4-7v4l3-3" fill="none" stroke="#fff" stroke-width="1.2"/></svg>
<div class="t" style="top:1035.15px;font-size:14px;color:#fff;left:1643.80px;">ENG</div>
<div class="t" style="top:1054.15px;font-size:14px;color:#fff;left:1650.00px;">US</div>
<div class="t" style="top:1032.56px;font-size:14.7px;color:#fff;right:1974.70px;">1:13 PM</div>
<div class="t" style="top:1052.00px;font-size:15px;color:#fff;right:1974.70px;">8/15/2023</div>
<div class="a" style="left:1875px;top:1040px;width:20px;height:20px;background:#0a8ee8;border-radius:50%"></div>
<div class="t" style="top:1043.54px;font-size:12px;color:#111;left:1881.50px;">4</div>
<!-- ============ RIGHT MONITOR: HEIDISQL ============ -->
<div class="a" style="left:1920px;top:0px;width:1920px;height:1032px;background:#fff;"></div>
<svg style="left:1926px;top:0" width="20" height="20"><g transform="scale(0.667)"><circle cx="15" cy="15" r="14" fill="#e4e4e4"/><path d="M1 16a14 14 0 0 1 28 0z" fill="#4db32b"/><path d="M5 9a12 9 0 0 1 20 0" fill="#7dd850" opacity=".6"/><circle cx="15" cy="15" r="14" fill="none" stroke="#8a9a8a" stroke-width="1"/><rect x="6" y="8.5" width="17" height="12" rx="1" fill="#f5a623"/><text x="7.3" y="18.8" font-family="Liberation Sans" font-weight="bold" font-size="10.5" fill="#111">HS</text></g></svg>
<div class="t" style="top:2.85px;font-size:14px;color:#b4b6bd;font-weight:bold;left:1951.50px;">Localhost\sidera\pages\ - HeidiSQL 10.1.0.5464</div>
<svg style="left:0;top:0" width="1" height="1"><path d="M3757 10.2h9" stroke="#999" stroke-width="1.1"/><path d="M3785.5 8.5h7.5v6.5h-7.5z M3787.5 8.5v-2.5h7.5v6.5h-2" fill="none" stroke="#999" stroke-width="1.1"/><path d="M3815.5 6.5l7.5 7.5M3823 6.5l-7.5 7.5" stroke="#999" stroke-width="1.3"/></svg>
<div class="t" style="top:25.70px;font-size:14.3px;color:#000;left:1925.70px;">File</div>
<div class="t" style="top:25.70px;font-size:14.3px;color:#000;left:1958.60px;">Edit</div>
<div class="t" style="top:25.70px;font-size:14.3px;color:#000;left:1994.50px;">Search</div>
<div class="t" style="top:25.70px;font-size:14.3px;color:#000;left:2048.00px;">Tools</div>
<div class="t" style="top:25.70px;font-size:14.3px;color:#000;left:2092.80px;">Go to</div>
<div class="t" style="top:25.70px;font-size:14.3px;color:#000;left:2140.60px;">Help</div>
<div class="a" style="left:1923px;top:45px;width:1068px;height:41px;background:#fff;border:1px solid #d3d3d3"></div>
<div class="a" style="left:2819px;top:47px;width:102px;height:37px;background:#a7c9e8;"></div>
<svg style="left:0;top:0" width="1" height="1"><defs><linearGradient id="gb" x1="0" y1="0" x2="0" y2="1"><stop offset="0" stop-color="#a9c8f2"/><stop offset="1" stop-color="#3f74c8"/></linearGradient><linearGradient id="gg" x1="0" y1="0" x2="0" y2="1"><stop offset="0" stop-color="#8fd46a"/><stop offset="1" stop-color="#2f9a2a"/></linearGradient><linearGradient id="gr" x1="0" y1="0" x2="0" y2="1"><stop offset="0" stop-color="#f79a8f"/><stop offset="1" stop-color="#d9352b"/></linearGradient><linearGradient id="go" x1="0" y1="0" x2="0" y2="1"><stop offset="0" stop-color="#f0b460"/><stop offset="1" stop-color="#c97a1e"/></linearGradient><linearGradient id="gy" x1="0" y1="0" x2="0" y2="1"><stop offset="0" stop-color="#ffe9a0"/><stop offset="1" stop-color="#e8b020"/></linearGradient></defs><path d="M1926.5 56v14" stroke="#777" stroke-width="1" stroke-dasharray="1 2"/><rect x="1947" y="56" width="13" height="19" fill="#d8d8d8" stroke="#9a9a9a"/><path d="M1950 60h7M1950 63h7M1950 66h7" stroke="#9a9a9a"/><circle cx="1957" cy="70" r="1.5" fill="#3ab53a"/><path d="M1940 75l3-8 6-5 4 4-5 6z" fill="url(#gb)"/><path d="M1974 64h5l-2.5 3z" fill="#444"/><path d="M1993 75l3-8 5-4 4 4-4 5z" fill="url(#gb)"/><path d="M2013 55l-3 8-5 4-4-4 4-5z" fill="url(#gb)"/><path d="M2000 64l6 6" stroke="#aaa" stroke-width="3"/><rect x="2021" y="50" width="1" height="32" fill="#d0d0d0"/><path d="M2033.5 56h8l3 3v11h-11z" fill="#e6f0fc" stroke="#4a86d8"/><path d="M2041.5 61h8l3 3v11h-11z" fill="#e6f0fc" stroke="#4a86d8"/><rect x="2060.5" y="57" width="15" height="18" rx="1.5" fill="url(#go)" stroke="#a0601a"/><rect x="2064" y="55.5" width="8" height="3.5" fill="#f5d890" stroke="#a0601a" stroke-width=".6"/><rect x="2069.5" y="65" width="10" height="10" fill="#eee" stroke="#999"/><path d="M2071 68h7M2071 70.5h7M2071 73h7" stroke="#aaa" stroke-width=".8"/><path d="M2096 72l5-3h8M2099 66c2-4 7-5 10-2" fill="none" stroke="#c8c8c8" stroke-width="1.5"/><rect x="2130" y="56" width="11" height="8" fill="#e6f0fc" stroke="#4a86d8"/><rect x="2125.5" y="63" width="19.5" height="10" rx="2" fill="#c8c8c8" stroke="#777"/><rect x="2129" y="70" width="13" height="4" fill="#eee" stroke="#4a86d8" stroke-width=".7"/><rect x="2153" y="50" width="1" height="32" fill="#d0d0d0"/><path d="M2170 63a8 7 0 0 1 14-3l2-2v7h-7l2-2a5 4 0 0 0-8 2z" fill="url(#gg)"/><path d="M2186 68a8 7 0 0 1-14 3l-2 2v-7h7l-2 2a5 4 0 0 0 8-2z" fill="url(#gg)"/><path d="M2200 64h5l-2.5 3z" fill="#444"/><circle cx="2232" cy="59" r="3.5" fill="#f0c080" stroke="#b08040" stroke-width=".6"/><path d="M2226 70a6 6 0 0 1 11-4v4z" fill="#6cc050"/><circle cx="2224" cy="64" r="3.5" fill="#f0c080" stroke="#a06030" stroke-width=".6"/><path d="M2217 75a7 6 0 0 1 14 0z" fill="#4a90e0"/><path d="M2220.5 62a3.5 3 0 0 1 7 0z" fill="#8a5020"/><path d="M2245.5 56h11l3 3v16h-14z" fill="#f4f4f4" stroke="#9a9a9a"/><path d="M2248 61h3M2252 61h3M2248 64h3M2252 64h3M2248 67h3" stroke="#aaa" stroke-width="1"/><path d="M2257 66v4h-3l5 5 5-5h-3v-4z" fill="#3aa03a"/><path d="M2271.5 59v12c0 2 4 3 8 3s8-1 8-3v-12" fill="#eee" stroke="#aaa"/><ellipse cx="2279.5" cy="59" rx="8" ry="2.5" fill="#f8f8f8" stroke="#aaa"/><rect x="2281" y="65" width="10" height="10" fill="#4a86d8"/><rect x="2283" y="71" width="6" height="4" fill="#8ee08e"/><rect x="2283" y="65" width="6" height="3" fill="#e8f0fa"/><rect x="2296" y="50" width="1" height="32" fill="#d0d0d0"/><circle cx="2322.5" cy="65" r="9.3" fill="url(#gb)" stroke="#4a70b0" stroke-width=".8"/><circle cx="2322.5" cy="65" r="7" fill="none" stroke="#d8e6f8" stroke-width="1"/><path d="M2319.5 62.5a3 3 0 1 1 4 2.8c-1 .4-1 1-1 2" fill="none" stroke="#fff" stroke-width="1.8"/><circle cx="2322.5" cy="70" r="1.1" fill="#fff"/><path d="M2350 57h3v17h-3z M2364 57v17l-10-8.5z" fill="#3d76d6"/><path d="M2397 57h-3v17h3z M2383 57v17l10-8.5z" fill="#3d76d6"/><circle cx="2424.5" cy="65" r="9.3" fill="url(#gg)" stroke="#2a7a2a" stroke-width=".8"/><path d="M2424.5 60v10M2419.5 65h10" stroke="#fff" stroke-width="2.6"/><circle cx="2458.5" cy="65" r="9.3" fill="url(#gr)" stroke="#a82a20" stroke-width=".8"/><path d="M2453.5 65h10" stroke="#fff" stroke-width="2.6"/><path d="M2486 67l5.5 6 11-12" fill="none" stroke="#c4c4c4" stroke-width="2.5"/><path d="M2529 69l5 4" stroke="#c8c8c8" stroke-width="1.3"/><path d="M2556 74l11-10M2556 68v6h5" fill="none" stroke="#c4c4c4" stroke-width="1.5"/><path d="M2584 64h5l-2.5 3z" fill="#888"/><path d="M2603 56h7l2 2h9v17h-18z" fill="url(#gy)" stroke="#d89a20" stroke-width=".8"/><circle cx="2617" cy="68" r="4.5" fill="#b8d8f8" stroke="#8ab0d8"/><path d="M2620 71l3 4" stroke="#c0804a" stroke-width="2"/><path d="M2637 64h5l-2.5 3z" fill="#444"/><path d="M2657 59v15M2660 56h14" stroke="#c4c4c4" stroke-width="1.5"/><path d="M2692.5 71l1 1" stroke="#bbb"/><rect x="2725" y="63" width="7.5" height="11" rx="1" fill="#444"/><rect x="2735" y="63" width="7.5" height="11" rx="1" fill="#444"/><rect x="2726.5" y="57" width="5" height="7" fill="#666"/><rect x="2736" y="57" width="5" height="7" fill="#666"/><rect x="2731" y="61" width="5" height="5" fill="#555"/><text x="2758" y="65" font-family="Liberation Sans" font-style="italic" font-weight="bold" font-size="11" fill="#3a7ae0">b</text><text x="2766" y="75" font-family="Liberation Sans" font-style="italic" font-weight="bold" font-size="12" fill="#3a7ae0">a</text><path d="M2763 66l4 3" stroke="#3aa03a" stroke-width="1.5"/><path d="M2793.5 56h12l3 3v16h-15z" fill="#f6f6f6" stroke="#b0b0b0"/><path d="M2795 74l3-5 11-11 2 2-11 11z" fill="url(#gy)" stroke="#b89030" stroke-width=".6"/><path d="M2793 75l2-3 2 2z" fill="#5080c0"/><path d="M2836 56l10 18h-20z" fill="url(#gy)" stroke="#d0a020" stroke-width=".8"/><rect x="2835" y="61" width="2" height="7" fill="#e8c060"/><circle cx="2842" cy="71" r="4.2" fill="#e8702a"/><path d="M2839.5 71h5" stroke="#fff" stroke-width="1.5"/><path d="M2861.5 56h13l4 4v15h-17z" fill="#f8f8f8" stroke="#aaa"/><path d="M2864 59.5h8M2864 62h10" stroke="#bbb" stroke-width=".8"/><text x="2863" y="74" font-family="Liberation Sans" font-weight="bold" font-size="9" fill="#9a2050">0x</text><path d="M2895 62h7M2895 65h6M2895 68h6M2895 71h7" stroke="#333" stroke-width="1.5"/><path d="M2904 61h6a3 3 0 0 1 0 6h-4" fill="none" stroke="#2a5ab0" stroke-width="2"/><path d="M2907 64v6l-4-3z" fill="#2a5ab0"/><circle cx="2938" cy="60" r="1.5" fill="#c8c8c8"/><path d="M2938 66c2 1 2 4 0 7" stroke="#c8c8c8" stroke-width="2" fill="none"/><path d="M2969 56h8l6 6v8l-6 6h-8l-6-6v-8z" fill="#c8c8c8"/><path d="M2969 62l8 8M2977 62l-8 8" stroke="#fff" stroke-width="2.8"/></svg>
<svg style="left:0;top:0" width="1" height="1"><path d="M1921.5 109V87.5h170V109 M2094.5 109V87.5h170V109" fill="none" stroke="#d9d9d9" stroke-width="1"/></svg>
<div class="t" style="top:91.69px;font-size:14.9px;color:#000;left:1945.50px;">Database filter</div>
<div class="t" style="top:91.60px;font-size:15px;color:#000;left:2118.40px;">Table filter</div>
<div class="a" style="left:1921px;top:109px;width:373px;height:761px;background:#fff;border:1px solid #d6d6d6"></div>
<div class="a" style="left:1922px;top:410px;width:371px;height:20px;background:#d9d9d9;"></div>
<svg style="left:0;top:0" width="1" height="1"><rect x="1928.5" y="115" width="9" height="9" fill="#fff" stroke="#8f8f8f"/><path d="M1930.5 119.5h5" stroke="#333" stroke-width="1.2"/><path d="M1941 112c4-1 8 1 10 5 2 3 3 6 6 8l2 2-3-.5c-2 0-3-1-4-2-2-3-4-4-6-6-2-2-4-4-5-6z" fill="none" stroke="#5e8ca6" stroke-width="1.2"/><rect x="1941.1" y="135" width="9" height="9" fill="#fff" stroke="#8f8f8f"/><path d="M1943.1 139.5h5" stroke="#333" stroke-width="1.2"/><path d="M1945.6 137v5" stroke="#333" stroke-width="1.2"/><path d="M1955 134.5v11c0 1.5 3.5 2.5 7.5 2.5s7.5-1 7.5-2.5v-11" fill="#d6d6d6" stroke="#a8a8a8"/><ellipse cx="1962.5" cy="134.5" rx="7.5" ry="2.3" fill="#fafafa" stroke="#a8a8a8"/><rect x="1941.1" y="155" width="9" height="9" fill="#fff" stroke="#8f8f8f"/><path d="M1943.1 159.5h5" stroke="#333" stroke-width="1.2"/><path d="M1945.6 157v5" stroke="#333" stroke-width="1.2"/><path d="M1955 154.5v11c0 1.5 3.5 2.5 7.5 2.5s7.5-1 7.5-2.5v-11" fill="#f2f2f2" stroke="#d8d8d8"/><ellipse cx="1962.5" cy="154.5" rx="7.5" ry="2.3" fill="#fafafa" stroke="#d8d8d8"/><rect x="1941.1" y="175" width="9" height="9" fill="#fff" stroke="#8f8f8f"/><path d="M1943.1 179.5h5" stroke="#333" stroke-width="1.2"/><path d="M1945.6 177v5" stroke="#333" stroke-width="1.2"/><path d="M1955 174.5v11c0 1.5 3.5 2.5 7.5 2.5s7.5-1 7.5-2.5v-11" fill="#f2f2f2" stroke="#d8d8d8"/><ellipse cx="1962.5" cy="174.5" rx="7.5" ry="2.3" fill="#fafafa" stroke="#d8d8d8"/><rect x="1941.1" y="195" width="9" height="9" fill="#fff" stroke="#8f8f8f"/><path d="M1943.1 199.5h5" stroke="#333" stroke-width="1.2"/><path d="M1945.6 197v5" stroke="#333" stroke-width="1.2"/><path d="M1955 194.5v11c0 1.5 3.5 2.5 7.5 2.5s7.5-1 7.5-2.5v-11" fill="#d6d6d6" stroke="#a8a8a8"/><ellipse cx="1962.5" cy="194.5" rx="7.5" ry="2.3" fill="#fafafa" stroke="#a8a8a8"/><rect x="1941.1" y="215" width="9" height="9" fill="#fff" stroke="#8f8f8f"/><path d="M1943.1 219.5h5" stroke="#333" stroke-width="1.2"/><path d="M1945.6 217v5" stroke="#333" stroke-width="1.2"/><path d="M1955 214.5v11c0 1.5 3.5 2.5 7.5 2.5s7.5-1 7.5-2.5v-11" fill="#f2f2f2" stroke="#d8d8d8"/><ellipse cx="1962.5" cy="214.5" rx="7.5" ry="2.3" fill="#fafafa" stroke="#d8d8d8"/><rect x="1941.1" y="235" width="9" height="9" fill="#fff" stroke="#8f8f8f"/><path d="M1943.1 239.5h5" stroke="#333" stroke-width="1.2"/><path d="M1945.6 237v5" stroke="#333" stroke-width="1.2"/><path d="M1955 234.5v11c0 1.5 3.5 2.5 7.5 2.5s7.5-1 7.5-2.5v-11" fill="#f2f2f2" stroke="#d8d8d8"/><ellipse cx="1962.5" cy="234.5" rx="7.5" ry="2.3" fill="#fafafa" stroke="#d8d8d8"/><rect x="1941.1" y="255" width="9" height="9" fill="#fff" stroke="#8f8f8f"/><path d="M1943.1 259.5h5" stroke="#333" stroke-width="1.2"/><path d="M1945.6 257v5" stroke="#333" stroke-width="1.2"/><path d="M1955 254.5v11c0 1.5 3.5 2.5 7.5 2.5s7.5-1 7.5-2.5v-11" fill="#f2f2f2" stroke="#d8d8d8"/><ellipse cx="1962.5" cy="254.5" rx="7.5" ry="2.3" fill="#fafafa" stroke="#d8d8d8"/><rect x="1941.1" y="275" width="9" height="9" fill="#fff" stroke="#8f8f8f"/><path d="M1943.1 279.5h5" stroke="#333" stroke-width="1.2"/><path d="M1955 274.5v11c0 1.5 3.5 2.5 7.5 2.5s7.5-1 7.5-2.5v-11" fill="#d6d6d6" stroke="#a8a8a8"/><ellipse cx="1962.5" cy="274.5" rx="7.5" ry="2.3" fill="#fafafa" stroke="#a8a8a8"/><path d="M1953 285l3 3 5-6" fill="none" stroke="#3aa63a" stroke-width="2.2"/><rect x="1966" y="292" width="17" height="16" fill="#eef3fb" stroke="#9fb4d3"/><path d="M1966.5 295h16" stroke="#9ccf8a" stroke-width="1.2"/><path d="M1968 298h13M1968 301h13M1968 304h13M1972 296v11M1977 296v11" stroke="#c0d0e8" stroke-width="1"/><rect x="2213.5" y="291.5" width="3" height="17" rx="1.5" fill="#efefef" stroke="#c4c4c4"/><rect x="1966" y="312" width="17" height="16" fill="#eef3fb" stroke="#9fb4d3"/><path d="M1966.5 315h16" stroke="#9ccf8a" stroke-width="1.2"/><path d="M1968 318h13M1968 321h13M1968 324h13M1972 316v11M1977 316v11" stroke="#c0d0e8" stroke-width="1"/><rect x="2213.5" y="311.5" width="1" height="17" rx="1.5" fill="#efefef" stroke="#c4c4c4"/><rect x="1966" y="332" width="17" height="16" fill="#eef3fb" stroke="#9fb4d3"/><path d="M1966.5 335h16" stroke="#9ccf8a" stroke-width="1.2"/><path d="M1968 338h13M1968 341h13M1968 344h13M1972 336v11M1977 336v11" stroke="#c0d0e8" stroke-width="1"/><rect x="2213.5" y="331.5" width="6" height="17" rx="1.5" fill="#efefef" stroke="#c4c4c4"/><rect x="1966" y="352" width="17" height="16" fill="#eef3fb" stroke="#9fb4d3"/><path d="M1966.5 355h16" stroke="#9ccf8a" stroke-width="1.2"/><path d="M1968 358h13M1968 361h13M1968 364h13M1972 356v11M1977 356v11" stroke="#c0d0e8" stroke-width="1"/><rect x="2213.5" y="351.5" width="5" height="17" rx="1.5" fill="#efefef" stroke="#c4c4c4"/><rect x="1966" y="372" width="17" height="16" fill="#eef3fb" stroke="#9fb4d3"/><path d="M1966.5 375h16" stroke="#9ccf8a" stroke-width="1.2"/><path d="M1968 378h13M1968 381h13M1968 384h13M1972 376v11M1977 376v11" stroke="#c0d0e8" stroke-width="1"/><rect x="2213.5" y="371.5" width="1" height="17" rx="1.5" fill="#efefef" stroke="#c4c4c4"/><rect x="1966" y="392" width="17" height="16" fill="#eef3fb" stroke="#9fb4d3"/><path d="M1966.5 395h16" stroke="#9ccf8a" stroke-width="1.2"/><path d="M1968 398h13M1968 401h13M1968 404h13M1972 396v11M1977 396v11" stroke="#c0d0e8" stroke-width="1"/><rect x="2213.5" y="391.5" width="12" height="17" rx="1.5" fill="#efefef" stroke="#c4c4c4"/><rect x="1966" y="412" width="17" height="16" fill="#eef3fb" stroke="#9fb4d3"/><path d="M1966.5 415h16" stroke="#9ccf8a" stroke-width="1.2"/><path d="M1968 418h13M1968 421h13M1968 424h13M1972 416v11M1977 416v11" stroke="#c0d0e8" stroke-width="1"/><rect x="2213.5" y="411.5" width="78" height="17" rx="1.5" fill="#6e6e6e" stroke="#505050"/><rect x="1966" y="432" width="17" height="16" fill="#eef3fb" stroke="#9fb4d3"/><path d="M1966.5 435h16" stroke="#9ccf8a" stroke-width="1.2"/><path d="M1968 438h13M1968 441h13M1968 444h13M1972 436v11M1977 436v11" stroke="#c0d0e8" stroke-width="1"/><rect x="2213.5" y="431.5" width="8" height="17" rx="1.5" fill="#efefef" stroke="#c4c4c4"/><rect x="1966" y="452" width="17" height="16" fill="#eef3fb" stroke="#9fb4d3"/><path d="M1966.5 455h16" stroke="#9ccf8a" stroke-width="1.2"/><path d="M1968 458h13M1968 461h13M1968 464h13M1972 456v11M1977 456v11" stroke="#c0d0e8" stroke-width="1"/><rect x="2213.5" y="451.5" width="41" height="17" rx="1.5" fill="#efefef" stroke="#c4c4c4"/><rect x="1941.1" y="475" width="9" height="9" fill="#fff" stroke="#8f8f8f"/><path d="M1943.1 479.5h5" stroke="#333" stroke-width="1.2"/><path d="M1945.6 477v5" stroke="#333" stroke-width="1.2"/><path d="M1955 474.5v11c0 1.5 3.5 2.5 7.5 2.5s7.5-1 7.5-2.5v-11" fill="#f2f2f2" stroke="#d8d8d8"/><ellipse cx="1962.5" cy="474.5" rx="7.5" ry="2.3" fill="#fafafa" stroke="#d8d8d8"/><rect x="1941.1" y="495" width="9" height="9" fill="#fff" stroke="#8f8f8f"/><path d="M1943.1 499.5h5" stroke="#333" stroke-width="1.2"/><path d="M1945.6 497v5" stroke="#333" stroke-width="1.2"/><path d="M1955 494.5v11c0 1.5 3.5 2.5 7.5 2.5s7.5-1 7.5-2.5v-11" fill="#f2f2f2" stroke="#d8d8d8"/><ellipse cx="1962.5" cy="494.5" rx="7.5" ry="2.3" fill="#fafafa" stroke="#d8d8d8"/><rect x="1941.1" y="515" width="9" height="9" fill="#fff" stroke="#8f8f8f"/><path d="M1943.1 519.5h5" stroke="#333" stroke-width="1.2"/><path d="M1945.6 517v5" stroke="#333" stroke-width="1.2"/><path d="M1955 514.5v11c0 1.5 3.5 2.5 7.5 2.5s7.5-1 7.5-2.5v-11" fill="#f2f2f2" stroke="#d8d8d8"/><ellipse cx="1962.5" cy="514.5" rx="7.5" ry="2.3" fill="#fafafa" stroke="#d8d8d8"/><rect x="1941.1" y="535" width="9" height="9" fill="#fff" stroke="#8f8f8f"/><path d="M1943.1 539.5h5" stroke="#333" stroke-width="1.2"/><path d="M1945.6 537v5" stroke="#333" stroke-width="1.2"/><path d="M1955 534.5v11c0 1.5 3.5 2.5 7.5 2.5s7.5-1 7.5-2.5v-11" fill="#f2f2f2" stroke="#d8d8d8"/><ellipse cx="1962.5" cy="534.5" rx="7.5" ry="2.3" fill="#fafafa" stroke="#d8d8d8"/><rect x="1941.1" y="555" width="9" height="9" fill="#fff" stroke="#8f8f8f"/><path d="M1943.1 559.5h5" stroke="#333" stroke-width="1.2"/><path d="M1945.6 557v5" stroke="#333" stroke-width="1.2"/><path d="M1955 554.5v11c0 1.5 3.5 2.5 7.5 2.5s7.5-1 7.5-2.5v-11" fill="#f2f2f2" stroke="#d8d8d8"/><ellipse cx="1962.5" cy="554.5" rx="7.5" ry="2.3" fill="#fafafa" stroke="#d8d8d8"/><rect x="1941.1" y="575" width="9" height="9" fill="#fff" stroke="#8f8f8f"/><path d="M1943.1 579.5h5" stroke="#333" stroke-width="1.2"/><path d="M1945.6 577v5" stroke="#333" stroke-width="1.2"/><path d="M1955 574.5v11c0 1.5 3.5 2.5 7.5 2.5s7.5-1 7.5-2.5v-11" fill="#f2f2f2" stroke="#d8d8d8"/><ellipse cx="1962.5" cy="574.5" rx="7.5" ry="2.3" fill="#fafafa" stroke="#d8d8d8"/><rect x="1941.1" y="595" width="9" height="9" fill="#fff" stroke="#8f8f8f"/><path d="M1943.1 599.5h5" stroke="#333" stroke-width="1.2"/><path d="M1945.6 597v5" stroke="#333" stroke-width="1.2"/><path d="M1955 594.5v11c0 1.5 3.5 2.5 7.5 2.5s7.5-1 7.5-2.5v-11" fill="#f2f2f2" stroke="#d8d8d8"/><ellipse cx="1962.5" cy="594.5" rx="7.5" ry="2.3" fill="#fafafa" stroke="#d8d8d8"/><rect x="1941.1" y="615" width="9" height="9" fill="#fff" stroke="#8f8f8f"/><path d="M1943.1 619.5h5" stroke="#333" stroke-width="1.2"/><path d="M1945.6 617v5" stroke="#333" stroke-width="1.2"/><path d="M1955 614.5v11c0 1.5 3.5 2.5 7.5 2.5s7.5-1 7.5-2.5v-11" fill="#f2f2f2" stroke="#d8d8d8"/><ellipse cx="1962.5" cy="614.5" rx="7.5" ry="2.3" fill="#fafafa" stroke="#d8d8d8"/><rect x="1941.1" y="635" width="9" height="9" fill="#fff" stroke="#8f8f8f"/><path d="M1943.1 639.5h5" stroke="#333" stroke-width="1.2"/><path d="M1945.6 637v5" stroke="#333" stroke-width="1.2"/><path d="M1955 634.5v11c0 1.5 3.5 2.5 7.5 2.5s7.5-1 7.5-2.5v-11" fill="#f2f2f2" stroke="#d8d8d8"/><ellipse cx="1962.5" cy="634.5" rx="7.5" ry="2.3" fill="#fafafa" stroke="#d8d8d8"/></svg>
<div class="t" style="top:113.47px;font-size:14.8px;color:#000;left:1966.50px;">Localhost</div>
<div class="t" style="top:133.47px;font-size:14.8px;color:#000;left:1978.00px;">information_schema</div>
<div class="t" style="top:133.90px;font-size:14.3px;color:#000;right:1552.00px;">0 B</div>
<div class="t" style="top:153.47px;font-size:14.8px;color:#000;left:1978.00px;">mysql</div>
<div class="t" style="top:173.47px;font-size:14.8px;color:#000;left:1978.00px;">nemanja_pure</div>
<div class="t" style="top:193.47px;font-size:14.8px;color:#000;left:1978.00px;">nemanja_tefter1</div>
<div class="t" style="top:193.90px;font-size:14.3px;color:#000;right:1552.00px;">458.6 KiB</div>
<div class="t" style="top:213.47px;font-size:14.8px;color:#000;left:1978.00px;">nemanja_teftern</div>
<div class="t" style="top:233.47px;font-size:14.8px;color:#000;left:1978.00px;">performance_schema</div>
<div class="t" style="top:253.47px;font-size:14.8px;color:#000;left:1978.00px;">shop</div>
<div class="t" style="top:273.47px;font-size:14.8px;color:#000;left:1978.00px;">sidera</div>
<div class="t" style="top:273.90px;font-size:14.3px;color:#000;right:1552.00px;">122.3 KiB</div>
<div class="t" style="top:293.47px;font-size:14.8px;color:#000;left:1990.50px;">category</div>
<div class="t" style="top:293.90px;font-size:14.3px;color:#b9b9b9;right:1552.00px;">2.3 KiB</div>
<div class="t" style="top:313.47px;font-size:14.8px;color:#000;left:1990.50px;">comments</div>
<div class="t" style="top:313.90px;font-size:14.3px;color:#b9b9b9;right:1552.00px;">1.0 KiB</div>
<div class="t" style="top:333.47px;font-size:14.8px;color:#000;left:1990.50px;">home</div>
<div class="t" style="top:333.90px;font-size:14.3px;color:#b9b9b9;right:1552.00px;">4.9 KiB</div>
<div class="t" style="top:353.47px;font-size:14.8px;color:#000;left:1990.50px;">images</div>
<div class="t" style="top:353.90px;font-size:14.3px;color:#b9b9b9;right:1552.00px;">4.2 KiB</div>
<div class="t" style="top:373.47px;font-size:14.8px;color:#000;left:1990.50px;">job_offers</div>
<div class="t" style="top:373.90px;font-size:14.3px;color:#b9b9b9;right:1552.00px;">1.0 KiB</div>
<div class="t" style="top:393.47px;font-size:14.8px;color:#000;left:1990.50px;">newsletter</div>
<div class="t" style="top:393.90px;font-size:14.3px;color:#b9b9b9;right:1552.00px;">9.1 KiB</div>
<div class="t" style="top:413.47px;font-size:14.8px;color:#000;left:1990.50px;">pages</div>
<div class="t" style="top:413.90px;font-size:14.3px;color:#dcdcdc;right:1552.00px;">61.9 KiB</div>
<div class="t" style="top:433.47px;font-size:14.8px;color:#000;left:1990.50px;">subcategory</div>
<div class="t" style="top:433.90px;font-size:14.3px;color:#b9b9b9;right:1552.00px;">5.9 KiB</div>
<div class="t" style="top:453.47px;font-size:14.8px;color:#000;left:1990.50px;">users</div>
<div class="t" style="top:453.90px;font-size:14.3px;color:#b9b9b9;right:1552.00px;">32.0 KiB</div>
<div class="t" style="top:473.47px;font-size:14.8px;color:#000;left:1978.00px;">smart1</div>
<div class="t" style="top:493.47px;font-size:14.8px;color:#000;left:1978.00px;">smart2</div>
<div class="t" style="top:513.47px;font-size:14.8px;color:#000;left:1978.00px;">smart3</div>
<div class="t" style="top:533.47px;font-size:14.8px;color:#000;left:1978.00px;">sys</div>
<div class="t" style="top:553.47px;font-size:14.8px;color:#000;left:1978.00px;">tefter1</div>
<div class="t" style="top:573.47px;font-size:14.8px;color:#000;left:1978.00px;">tefter2</div>
<div class="t" style="top:593.47px;font-size:14.8px;color:#000;left:1978.00px;">tefter3</div>
<div class="t" style="top:613.47px;font-size:14.8px;color:#000;left:1978.00px;">tefter_demo_original</div>
<div class="t" style="top:633.47px;font-size:14.8px;color:#000;left:1978.00px;">tefter_demo_updated</div>
<div class="a" style="left:2299px;top:113px;width:1540px;height:759px;background:#fff;border:1px solid #d6d6d6"></div>
<div class="a" style="left:2702px;top:86px;width:70px;height:28px;background:#fff;border:1px solid #d6d6d6;border-bottom:none"></div>
<svg style="left:0;top:0" width="1" height="1"><path d="M1923 92v12c0 2 4 3 8.5 3s8.5-1 8.5-3v-12" fill="#eee" stroke="#aaa"/><ellipse cx="1931.5" cy="92" rx="8.5" ry="2.5" fill="#f8f8f8" stroke="#aaa"/><path d="M1922 106h7l-2 2h-5z" fill="#999"/><rect x="2096" y="90" width="18" height="17" fill="#eef3fb" stroke="#8aa8d0"/><path d="M2096.5 93h17" stroke="#6cc06c" stroke-width="1.2"/><path d="M2098 97h14M2098 100h14M2098 103h14M2102 94v12M2107 94v12" stroke="#b8cce8"/><path d="M2095 106h7l-2 2h-5z" fill="#999"/><path d="M2279 90l2.6 5.6 6.2.6-4.6 4.2 1.3 6.1-5.5-3.2-5.5 3.2 1.3-6.1-4.6-4.2 6.2-.6z" fill="url(#gy)" stroke="#d9a21e" stroke-width=".7"/><rect x="2304.5" y="93" width="13" height="10" fill="#6a98d8" stroke="#555"/><rect x="2314" y="90" width="10" height="18" fill="#d8d8d8" stroke="#888"/><circle cx="2321" cy="99" r="1" fill="#3aa03a"/><path d="M2308 106h8" stroke="#888" stroke-width="2"/><path d="M2439.5 92v12c0 2 3.5 3 8 3s8-1 8-3v-12" fill="#eee" stroke="#aaa"/><ellipse cx="2447.5" cy="92" rx="8" ry="2.5" fill="#f8f8f8" stroke="#aaa"/><rect x="2586.5" y="91" width="18" height="17" fill="#eef3fb" stroke="#8aa8d0"/><path d="M2587 94h17" stroke="#6cc06c" stroke-width="1.2"/><path d="M2588.5 98h14M2588.5 101h14M2588.5 104h14M2592.5 95v12M2597.5 95v12" stroke="#b8cce8"/><path d="M2707 92.5h4M2707 95.5h4M2707 98.5h4M2707 101.5h4M2707 104.5h4M2713.5 92.5h4M2713.5 95.5h4M2713.5 98.5h4M2713.5 101.5h4M2713.5 104.5h4M2720 92.5h4M2720 95.5h4M2720 98.5h4M2720 101.5h4M2720 104.5h4" stroke="#333" stroke-width="1.6"/><path d="M2780 90.5v19l12-9.5z" fill="url(#gb)" stroke="#3a5ab0" stroke-width=".6"/><rect x="2856.5" y="96" width="17" height="9" rx="2" fill="#d8d8d8" stroke="#999"/><circle cx="2873" cy="106" r="3.5" fill="#3aa03a"/><path d="M2871 106h4M2873 104v4" stroke="#fff" stroke-width="1.2"/></svg>
<div class="t" style="top:94.20px;font-size:13.7px;color:#000;left:2331.80px;">Host: 127.0.0.1</div>
<div class="t" style="top:94.22px;font-size:13.8px;color:#000;left:2464.60px;">Database: sidera</div>
<div class="t" style="top:94.13px;font-size:13.9px;color:#000;left:2612.30px;">Table: pages</div>
<div class="t" style="top:92.40px;font-size:14.3px;color:#000;left:2732.90px;">Data</div>
<div class="t" style="top:93.80px;font-size:14.3px;color:#000;left:2802.50px;">Query</div>
<div class="t" style="top:122.48px;font-size:14.55px;color:#000;left:2304.40px;">sidera.pages: 134 rows total</div>
<div class="t" style="top:125.00px;font-size:14.3px;color:#8d8d8d;left:3155.80px;">Next</div>
<div class="t" style="top:125.00px;font-size:14.3px;color:#8d8d8d;left:3295.00px;">Show all</div>
<div class="t" style="top:124.83px;font-size:14.5px;color:#000;left:3443.00px;">Sorting (1)</div>
<div class="t" style="top:124.74px;font-size:14.6px;color:#000;left:3583.00px;">Columns (30/30)</div>
<div class="t" style="top:124.74px;font-size:14.6px;color:#000;left:3723.00px;">Filter</div>
<svg style="left:0;top:0" width="1" height="1"><path d="M3136 134v5M3139 134v5" stroke="#bbb" stroke-width="1.3" stroke-dasharray="1.5 1"/><path d="M3272 127v12M3277 134v5M3281 134v5M3285 128v10" stroke="#bbb" stroke-width="1.3" stroke-dasharray="1.5 1"/><rect x="3408" y="121" width="1" height="19" fill="#d0d0d0"/><defs><linearGradient id="tb" x1="0" y1="0" x2="0" y2="1"><stop offset="0" stop-color="#8fb6f0"/><stop offset="1" stop-color="#1f5fcf"/></linearGradient><linearGradient id="tg" x1="0" y1="0" x2="0" y2="1"><stop offset="0" stop-color="#c8c8c8"/><stop offset="1" stop-color="#6a6a6a"/></linearGradient></defs><path d="M3422.5 126.5h17l-8.5 9z" fill="url(#tb)"/><path d="M3562 126.5h17l-8.5 9z" fill="url(#tg)"/><path d="M3702 126.5h17l-8.5 9z" fill="url(#tg)"/></svg>
<div class="a" style="left:2304px;top:143px;width:1530px;height:22px;background:#e3e3e3;border-bottom:1px solid #c9c9c9;border-top:1px solid #dcdcdc"></div>
<svg style="left:0;top:0" width="1" height="1"><rect x="2364" y="144" width="1" height="20" fill="#c9c9c9"/><rect x="2365" y="144" width="1" height="20" fill="#f3f3f3"/><rect x="2458" y="144" width="1" height="20" fill="#c9c9c9"/><rect x="2459" y="144" width="1" height="20" fill="#f3f3f3"/><rect x="2572" y="144" width="1" height="20" fill="#c9c9c9"/><rect x="2573" y="144" width="1" height="20" fill="#f3f3f3"/><rect x="2641" y="144" width="1" height="20" fill="#c9c9c9"/><rect x="2642" y="144" width="1" height="20" fill="#f3f3f3"/><rect x="2708" y="144" width="1" height="20" fill="#c9c9c9"/><rect x="2709" y="144" width="1" height="20" fill="#f3f3f3"/><rect x="3008.5" y="144" width="1" height="20" fill="#c9c9c9"/><rect x="3009.5" y="144" width="1" height="20" fill="#f3f3f3"/><rect x="3308.5" y="144" width="1" height="20" fill="#c9c9c9"/><rect x="3309.5" y="144" width="1" height="20" fill="#f3f3f3"/><rect x="3608" y="144" width="1" height="20" fill="#c9c9c9"/><rect x="3609" y="144" width="1" height="20" fill="#f3f3f3"/></svg>
<div class="a" style="left:2304px;top:143px;width:1px;height:723px;background:#cfcfcf;"></div>
<div class="t" style="top:147.90px;font-size:13px;color:#000;right:1481.50px;">id</div>
<div class="t" style="top:147.90px;font-size:13px;color:#000;right:1387.60px;">category_id</div>
<div class="t" style="top:147.90px;font-size:13px;color:#000;right:1273.00px;">subcategory_id</div>
<div class="t" style="top:147.90px;font-size:13px;color:#000;right:1204.20px;">lang_id</div>
<div class="t" style="top:147.90px;font-size:13px;color:#000;left:2648.20px;">name</div>
<div class="t" style="top:147.90px;font-size:13px;color:#000;left:2737.80px;">title</div>
<div class="t" style="top:147.90px;font-size:13px;color:#000;left:3015.00px;">title_rs</div>
<div class="t" style="top:147.90px;font-size:13px;color:#000;left:3314.60px;">text</div>
<div class="t" style="top:147.90px;font-size:13px;color:#000;left:3614.90px;">text_rs</div>
<svg style="left:0;top:0" width="1" height="1"><path d="M2334 156.5l7-7" stroke="#e0a820" stroke-width="3" stroke-linecap="round"/><circle cx="2338" cy="153" r="4.3" fill="#f2c444" stroke="#c98a10" stroke-width=".8"/><circle cx="2330.5" cy="158.5" r="3.5" fill="#f2c444" stroke="#c98a10" stroke-width=".8"/><path d="M2714.5 146.5h8l-8 6h8" fill="none" stroke="#555" stroke-width="1.8"/><path d="M2715 164l3.5-7 3.5 7M2716 161.5h5" fill="none" stroke="#555" stroke-width="1.6"/><path d="M2731 147v15M2729.2 160.5l1.8 2.5 1.8-2.5" fill="none" stroke="#5a82c0" stroke-width="1.1"/></svg>
<div class="a" style="left:2305px;top:165px;width:1508px;height:680px;overflow:hidden">
<div class="t" style="top:3.44px;font-size:13.3px;color:#0000ff;font-weight:bold;right:1453.00px;">40</div>
<div class="t" style="top:3.53px;font-size:13.2px;color:#0000ff;right:1359.50px;">4</div>
<div class="t" style="top:3.53px;font-size:13.2px;color:#0000ff;right:1246.00px;">191</div>
<div class="t" style="top:3.53px;font-size:13.2px;color:#0000ff;right:1176.40px;">39</div>
<div class="t" style="top:3.70px;font-size:13px;color:#008000;left:347.30px;">name</div>
<div class="t" style="top:3.70px;font-size:13px;color:#008000;left:415.00px;">&lt;p&gt;Wellness &amp;amp; Spa&lt;/p&gt;</div>
<div class="t" style="top:4.37px;font-size:12.2px;color:#6ac36a;left:714.00px;">(NULL)</div>
<div class="t" style="top:4.37px;font-size:12.2px;color:#6ac36a;left:1314.00px;">(NULL)</div>
<div class="t" style="top:24.44px;font-size:13.3px;color:#0000ff;font-weight:bold;right:1453.00px;">34</div>
<div class="t" style="top:24.53px;font-size:13.2px;color:#0000ff;right:1359.50px;">4</div>
<div class="t" style="top:24.53px;font-size:13.2px;color:#0000ff;right:1246.00px;">188</div>
<div class="t" style="top:24.53px;font-size:13.2px;color:#0000ff;right:1176.40px;">33</div>
<div class="t" style="top:24.70px;font-size:13px;color:#008000;left:347.30px;">name</div>
<div class="t" style="top:24.70px;font-size:13px;color:#008000;left:415.00px;">&lt;p&gt;Technic &amp;amp; Telecom&lt;/p&gt;</div>
<div class="t" style="top:25.37px;font-size:12.2px;color:#6ac36a;left:714.00px;">(NULL)</div>
<div class="t" style="top:25.37px;font-size:12.2px;color:#6ac36a;left:1314.00px;">(NULL)</div>
<div class="t" style="top:45.44px;font-size:13.3px;color:#0000ff;font-weight:bold;right:1453.00px;">30</div>
<div class="t" style="top:45.53px;font-size:13.2px;color:#0000ff;right:1359.50px;">4</div>
<div class="t" style="top:45.53px;font-size:13.2px;color:#0000ff;right:1246.00px;">186</div>
<div class="t" style="top:45.53px;font-size:13.2px;color:#0000ff;right:1176.40px;">29</div>
<div class="t" style="top:45.70px;font-size:13px;color:#008000;left:347.30px;">name</div>
<div class="t" style="top:45.70px;font-size:13px;color:#008000;left:415.00px;">&lt;p&gt;Supermarket &amp;amp; Grocery store&amp;nbsp;&lt;...</div>
<div class="t" style="top:46.37px;font-size:12.2px;color:#6ac36a;left:714.00px;">(NULL)</div>
<div class="t" style="top:46.37px;font-size:12.2px;color:#6ac36a;left:1314.00px;">(NULL)</div>
<div class="t" style="top:66.44px;font-size:13.3px;color:#0000ff;font-weight:bold;right:1453.00px;">26</div>
<div class="t" style="top:66.53px;font-size:13.2px;color:#0000ff;right:1359.50px;">4</div>
<div class="t" style="top:66.53px;font-size:13.2px;color:#0000ff;right:1246.00px;">184</div>
<div class="t" style="top:66.53px;font-size:13.2px;color:#0000ff;right:1176.40px;">25</div>
<div class="t" style="top:66.70px;font-size:13px;color:#008000;left:347.30px;">name</div>
<div class="t" style="top:66.70px;font-size:13px;color:#008000;left:415.00px;">&lt;p&gt;Shopping Mall&lt;/p&gt;</div>
<div class="t" style="top:67.37px;font-size:12.2px;color:#6ac36a;left:714.00px;">(NULL)</div>
<div class="t" style="top:67.37px;font-size:12.2px;color:#6ac36a;left:1314.00px;">(NULL)</div>
<div class="t" style="top:87.44px;font-size:13.3px;color:#0000ff;font-weight:bold;right:1453.00px;">24</div>
<div class="t" style="top:87.53px;font-size:13.2px;color:#0000ff;right:1359.50px;">4</div>
<div class="t" style="top:87.53px;font-size:13.2px;color:#0000ff;right:1246.00px;">183</div>
<div class="t" style="top:87.53px;font-size:13.2px;color:#0000ff;right:1176.40px;">23</div>
<div class="t" style="top:87.70px;font-size:13px;color:#008000;left:347.30px;">name</div>
<div class="t" style="top:87.70px;font-size:13px;color:#008000;left:415.00px;">&lt;p&gt;Retail&lt;/p&gt;</div>
<div class="t" style="top:88.37px;font-size:12.2px;color:#6ac36a;left:714.00px;">(NULL)</div>
<div class="t" style="top:88.37px;font-size:12.2px;color:#6ac36a;left:1314.00px;">(NULL)</div>
<div class="t" style="top:108.44px;font-size:13.3px;color:#0000ff;font-weight:bold;right:1453.00px;">42</div>
<div class="t" style="top:108.53px;font-size:13.2px;color:#0000ff;right:1359.50px;">4</div>
<div class="t" style="top:108.53px;font-size:13.2px;color:#0000ff;right:1246.00px;">192</div>
<div class="t" style="top:108.53px;font-size:13.2px;color:#0000ff;right:1176.40px;">41</div>
<div class="t" style="top:108.70px;font-size:13px;color:#008000;left:347.30px;">name</div>
<div class="t" style="top:108.70px;font-size:13px;color:#008000;left:415.00px;">&lt;p&gt;Petrol Industry&lt;/p&gt;</div>
<div class="t" style="top:109.37px;font-size:12.2px;color:#6ac36a;left:714.00px;">(NULL)</div>
<div class="t" style="top:109.37px;font-size:12.2px;color:#6ac36a;left:1314.00px;">(NULL)</div>
<div class="t" style="top:129.44px;font-size:13.3px;color:#0000ff;font-weight:bold;right:1453.00px;">48</div>
<div class="t" style="top:129.53px;font-size:13.2px;color:#0000ff;right:1359.50px;">4</div>
<div class="t" style="top:129.53px;font-size:13.2px;color:#0000ff;right:1246.00px;">195</div>
<div class="t" style="top:129.53px;font-size:13.2px;color:#0000ff;right:1176.40px;">47</div>
<div class="t" style="top:129.70px;font-size:13px;color:#008000;left:347.30px;">name</div>
<div class="t" style="top:129.70px;font-size:13px;color:#008000;left:415.00px;">&lt;p&gt;Kids &amp;amp; Entertainment&lt;/p&gt;</div>
<div class="t" style="top:130.37px;font-size:12.2px;color:#6ac36a;left:714.00px;">(NULL)</div>
<div class="t" style="top:130.37px;font-size:12.2px;color:#6ac36a;left:1314.00px;">(NULL)</div>
<div class="t" style="top:150.44px;font-size:13.3px;color:#0000ff;font-weight:bold;right:1453.00px;">38</div>
<div class="t" style="top:150.53px;font-size:13.2px;color:#0000ff;right:1359.50px;">4</div>
<div class="t" style="top:150.53px;font-size:13.2px;color:#0000ff;right:1246.00px;">190</div>
<div class="t" style="top:150.53px;font-size:13.2px;color:#0000ff;right:1176.40px;">37</div>
<div class="t" style="top:150.70px;font-size:13px;color:#008000;left:347.30px;">name</div>
<div class="t" style="top:150.70px;font-size:13px;color:#008000;left:415.00px;">&lt;p&gt;Health care &amp;amp; Pharmacy&lt;/p&gt;</div>
<div class="t" style="top:151.37px;font-size:12.2px;color:#6ac36a;left:714.00px;">(NULL)</div>
<div class="t" style="top:151.37px;font-size:12.2px;color:#6ac36a;left:1314.00px;">(NULL)</div>
<div class="t" style="top:171.44px;font-size:13.3px;color:#0000ff;font-weight:bold;right:1453.00px;">28</div>
<div class="t" style="top:171.53px;font-size:13.2px;color:#0000ff;right:1359.50px;">4</div>
<div class="t" style="top:171.53px;font-size:13.2px;color:#0000ff;right:1246.00px;">185</div>
<div class="t" style="top:171.53px;font-size:13.2px;color:#0000ff;right:1176.40px;">27</div>
<div class="t" style="top:171.70px;font-size:13px;color:#008000;left:347.30px;">name</div>
<div class="t" style="top:171.70px;font-size:13px;color:#008000;left:415.00px;">&lt;p&gt;Food &amp;amp; Drink&lt;/p&gt;</div>
<div class="t" style="top:172.37px;font-size:12.2px;color:#6ac36a;left:714.00px;">(NULL)</div>
<div class="t" style="top:172.37px;font-size:12.2px;color:#6ac36a;left:1314.00px;">(NULL)</div>
<div class="t" style="top:192.44px;font-size:13.3px;color:#0000ff;font-weight:bold;right:1453.00px;">46</div>
<div class="t" style="top:192.53px;font-size:13.2px;color:#0000ff;right:1359.50px;">4</div>
<div class="t" style="top:192.53px;font-size:13.2px;color:#0000ff;right:1246.00px;">194</div>
<div class="t" style="top:192.53px;font-size:13.2px;color:#0000ff;right:1176.40px;">45</div>
<div class="t" style="top:192.70px;font-size:13px;color:#008000;left:347.30px;">name</div>
<div class="t" style="top:192.70px;font-size:13px;color:#008000;left:415.00px;">&lt;p&gt;Corporate Buildings &amp;amp; Offices&lt;/p&gt;</div>
<div class="t" style="top:193.37px;font-size:12.2px;color:#6ac36a;left:714.00px;">(NULL)</div>
<div class="t" style="top:193.37px;font-size:12.2px;color:#6ac36a;left:1314.00px;">(NULL)</div>
<div class="t" style="top:213.44px;font-size:13.3px;color:#0000ff;font-weight:bold;right:1453.00px;">32</div>
<div class="t" style="top:213.53px;font-size:13.2px;color:#0000ff;right:1359.50px;">4</div>
<div class="t" style="top:213.53px;font-size:13.2px;color:#0000ff;right:1246.00px;">187</div>
<div class="t" style="top:213.53px;font-size:13.2px;color:#0000ff;right:1176.40px;">31</div>
<div class="t" style="top:213.70px;font-size:13px;color:#008000;left:347.30px;">name</div>
<div class="t" style="top:213.70px;font-size:13px;color:#008000;left:415.00px;">&lt;p&gt;Beauty &amp;amp; Fashion&lt;/p&gt;</div>
<div class="t" style="top:214.37px;font-size:12.2px;color:#6ac36a;left:714.00px;">(NULL)</div>
<div class="t" style="top:214.37px;font-size:12.2px;color:#6ac36a;left:1314.00px;">(NULL)</div>
<div class="t" style="top:234.44px;font-size:13.3px;color:#0000ff;font-weight:bold;right:1453.00px;">36</div>
<div class="t" style="top:234.53px;font-size:13.2px;color:#0000ff;right:1359.50px;">4</div>
<div class="t" style="top:234.53px;font-size:13.2px;color:#0000ff;right:1246.00px;">189</div>
<div class="t" style="top:234.53px;font-size:13.2px;color:#0000ff;right:1176.40px;">35</div>
<div class="t" style="top:234.70px;font-size:13px;color:#008000;left:347.30px;">name</div>
<div class="t" style="top:234.70px;font-size:13px;color:#008000;left:415.00px;">&lt;p&gt;Banking &amp;amp; Finance&lt;/p&gt;</div>
<div class="t" style="top:235.37px;font-size:12.2px;color:#6ac36a;left:714.00px;">(NULL)</div>
<div class="t" style="top:235.37px;font-size:12.2px;color:#6ac36a;left:1314.00px;">(NULL)</div>
<div class="t" style="top:255.44px;font-size:13.3px;color:#0000ff;font-weight:bold;right:1453.00px;">44</div>
<div class="t" style="top:255.53px;font-size:13.2px;color:#0000ff;right:1359.50px;">4</div>
<div class="t" style="top:255.53px;font-size:13.2px;color:#0000ff;right:1246.00px;">193</div>
<div class="t" style="top:255.53px;font-size:13.2px;color:#0000ff;right:1176.40px;">43</div>
<div class="t" style="top:255.70px;font-size:13px;color:#008000;left:347.30px;">name</div>
<div class="t" style="top:255.70px;font-size:13px;color:#008000;left:415.00px;">&lt;p&gt;Automotive Industry&lt;/p&gt;</div>
<div class="t" style="top:256.37px;font-size:12.2px;color:#6ac36a;left:714.00px;">(NULL)</div>
<div class="t" style="top:256.37px;font-size:12.2px;color:#6ac36a;left:1314.00px;">(NULL)</div>
<div class="t" style="top:276.44px;font-size:13.3px;color:#0000ff;font-weight:bold;right:1453.00px;">50</div>
<div class="t" style="top:276.53px;font-size:13.2px;color:#0000ff;right:1359.50px;">4</div>
<div class="t" style="top:276.53px;font-size:13.2px;color:#0000ff;right:1246.00px;">196</div>
<div class="t" style="top:276.53px;font-size:13.2px;color:#0000ff;right:1176.40px;">49</div>
<div class="t" style="top:276.70px;font-size:13px;color:#008000;left:347.30px;">name</div>
<div class="t" style="top:276.70px;font-size:13px;color:#008000;left:415.00px;">&lt;p&gt;Art &amp;amp; Education&lt;/p&gt;</div>
<div class="t" style="top:277.37px;font-size:12.2px;color:#6ac36a;left:714.00px;">(NULL)</div>
<div class="t" style="top:277.37px;font-size:12.2px;color:#6ac36a;left:1314.00px;">(NULL)</div>
<div class="a" style="left:0;top:294px;width:1508px;height:21px;background:#ebebeb"></div>
<div class="a" style="left:59.5px;top:294px;width:2px;height:21px;background:#fff"></div>
<div class="a" style="left:153.5px;top:294px;width:2px;height:21px;background:#fff"></div>
<div class="a" style="left:267.5px;top:294px;width:2px;height:21px;background:#fff"></div>
<div class="a" style="left:336.5px;top:294px;width:2px;height:21px;background:#fff"></div>
<div class="a" style="left:403.5px;top:294px;width:2px;height:21px;background:#fff"></div>
<div class="a" style="left:704.0px;top:294px;width:2px;height:21px;background:#fff"></div>
<div class="a" style="left:1004.0px;top:294px;width:2px;height:21px;background:#fff"></div>
<div class="a" style="left:1303.5px;top:294px;width:2px;height:21px;background:#fff"></div>
<div class="t" style="top:297.44px;font-size:13.3px;color:#0000ff;font-weight:bold;right:1453.00px;">2</div>
<div class="t" style="top:297.53px;font-size:13.2px;color:#0000ff;right:1359.50px;">1</div>
<div class="t" style="top:297.53px;font-size:13.2px;color:#0000ff;right:1246.00px;">176</div>
<div class="t" style="top:297.53px;font-size:13.2px;color:#0000ff;right:1176.40px;">1</div>
<div class="t" style="top:297.70px;font-size:13px;color:#008000;left:347.30px;">name</div>
<div class="t" style="top:297.70px;font-size:13px;color:#008000;left:415.00px;">&lt;h3&gt;STARK ARENA&lt;/h3&gt;&lt;p&gt;The sw...</div>
<div class="t" style="top:298.37px;font-size:12.2px;color:#6ac36a;left:714.00px;">(NULL)</div>
<div class="t" style="top:297.70px;font-size:13px;color:#008000;left:1015.00px;">&lt;p&gt;&amp;Scaron;TARK ARENA&amp;nbsp;is the modern...</div>
<div class="t" style="top:298.37px;font-size:12.2px;color:#6ac36a;left:1314.00px;">(NULL)</div>
<div class="t" style="top:318.44px;font-size:13.3px;color:#0000ff;font-weight:bold;right:1453.00px;">58</div>
<div class="t" style="top:318.53px;font-size:13.2px;color:#0000ff;right:1359.50px;">3</div>
<div class="t" style="top:318.53px;font-size:13.2px;color:#0000ff;right:1246.00px;">239</div>
<div class="t" style="top:318.53px;font-size:13.2px;color:#0000ff;right:1176.40px;">57</div>
<div class="t" style="top:318.70px;font-size:13px;color:#008000;left:347.30px;">name</div>
<div class="t" style="top:318.70px;font-size:13px;color:#008000;left:415.00px;">&lt;h3&gt;Services&lt;/h3&gt;</div>
<div class="t" style="top:319.37px;font-size:12.2px;color:#6ac36a;left:714.00px;">(NULL)</div>
<div class="t" style="top:318.70px;font-size:13px;color:#008000;left:1015.00px;">&lt;ul&gt;&lt;li&gt;Service design&lt;/li&gt;&lt;li&gt;...</div>
<div class="t" style="top:319.37px;font-size:12.2px;color:#6ac36a;left:1314.00px;">(NULL)</div>
<div class="t" style="top:339.44px;font-size:13.3px;color:#0000ff;font-weight:bold;right:1453.00px;">62</div>
<div class="t" style="top:339.53px;font-size:13.2px;color:#0000ff;right:1359.50px;">3</div>
<div class="t" style="top:339.53px;font-size:13.2px;color:#0000ff;right:1246.00px;">237</div>
<div class="t" style="top:339.53px;font-size:13.2px;color:#0000ff;right:1176.40px;">61</div>
<div class="t" style="top:339.70px;font-size:13px;color:#008000;left:347.30px;">name</div>
<div class="t" style="top:339.70px;font-size:13px;color:#008000;left:415.00px;">&lt;h3&gt;Retail space&lt;/h3&gt;</div>
<div class="t" style="top:340.37px;font-size:12.2px;color:#6ac36a;left:714.00px;">(NULL)</div>
<div class="t" style="top:339.70px;font-size:13px;color:#008000;left:1015.00px;">&lt;ul&gt;&lt;li&gt;Formats development&lt;/li&gt;...</div>
<div class="t" style="top:340.37px;font-size:12.2px;color:#6ac36a;left:1314.00px;">(NULL)</div>
<div class="t" style="top:360.44px;font-size:13.3px;color:#0000ff;font-weight:bold;right:1453.00px;">66</div>
<div class="t" style="top:360.53px;font-size:13.2px;color:#0000ff;right:1359.50px;">3</div>
<div class="t" style="top:360.53px;font-size:13.2px;color:#0000ff;right:1246.00px;">242</div>
<div class="t" style="top:360.53px;font-size:13.2px;color:#0000ff;right:1176.40px;">65</div>
<div class="t" style="top:360.70px;font-size:13px;color:#008000;left:347.30px;">name</div>
<div class="t" style="top:360.70px;font-size:13px;color:#008000;left:415.00px;">&lt;h3&gt;Insight &amp;amp;&lt;br /&gt;research&lt;/h3&gt;...</div>
<div class="t" style="top:361.37px;font-size:12.2px;color:#6ac36a;left:714.00px;">(NULL)</div>
<div class="t" style="top:360.70px;font-size:13px;color:#008000;left:1015.00px;">&lt;ul&gt;&lt;li&gt;Organization evaluation&lt;/li&gt;...</div>
<div class="t" style="top:361.37px;font-size:12.2px;color:#6ac36a;left:1314.00px;">(NULL)</div>
<div class="t" style="top:381.44px;font-size:13.3px;color:#0000ff;font-weight:bold;right:1453.00px;">54</div>
<div class="t" style="top:381.53px;font-size:13.2px;color:#0000ff;right:1359.50px;">3</div>
<div class="t" style="top:381.53px;font-size:13.2px;color:#0000ff;right:1246.00px;">241</div>
<div class="t" style="top:381.53px;font-size:13.2px;color:#0000ff;right:1176.40px;">53</div>
<div class="t" style="top:381.70px;font-size:13px;color:#008000;left:347.30px;">name</div>
<div class="t" style="top:381.70px;font-size:13px;color:#008000;left:415.00px;">&lt;h3&gt;Implementation&lt;/h3&gt;</div>
<div class="t" style="top:382.37px;font-size:12.2px;color:#6ac36a;left:714.00px;">(NULL)</div>
<div class="t" style="top:381.70px;font-size:13px;color:#008000;left:1015.00px;">&lt;ul&gt;&lt;li&gt;Implementation supervision&lt;/li...</div>
<div class="t" style="top:382.37px;font-size:12.2px;color:#6ac36a;left:1314.00px;">(NULL)</div>
<div class="t" style="top:402.44px;font-size:13.3px;color:#0000ff;font-weight:bold;right:1453.00px;">8</div>
<div class="t" style="top:402.53px;font-size:13.2px;color:#0000ff;right:1359.50px;">1</div>
<div class="t" style="top:402.53px;font-size:13.2px;color:#0000ff;right:1246.00px;">176</div>
<div class="t" style="top:402.53px;font-size:13.2px;color:#0000ff;right:1176.40px;">7</div>
<div class="t" style="top:402.70px;font-size:13px;color:#008000;left:347.30px;">name</div>
<div class="t" style="top:402.70px;font-size:13px;color:#008000;left:415.00px;">&lt;h3&gt;IDEA ORGANIC&lt;/h3&gt;&lt;p&gt;World ...</div>
<div class="t" style="top:403.37px;font-size:12.2px;color:#6ac36a;left:714.00px;">(NULL)</div>
<div class="t" style="top:402.70px;font-size:13px;color:#008000;left:1015.00px;">&lt;p&gt;Last few years the awareness of consumer...</div>
<div class="t" style="top:403.37px;font-size:12.2px;color:#6ac36a;left:1314.00px;">(NULL)</div>
<div class="t" style="top:423.44px;font-size:13.3px;color:#0000ff;font-weight:bold;right:1453.00px;">4</div>
<div class="t" style="top:423.53px;font-size:13.2px;color:#0000ff;right:1359.50px;">1</div>
<div class="t" style="top:423.53px;font-size:13.2px;color:#0000ff;right:1246.00px;">176</div>
<div class="t" style="top:423.53px;font-size:13.2px;color:#0000ff;right:1176.40px;">3</div>
<div class="t" style="top:423.70px;font-size:13px;color:#008000;left:347.30px;">name</div>
<div class="t" style="top:423.70px;font-size:13px;color:#008000;left:415.00px;">&lt;h3&gt;IDEA LONDON&lt;/h3&gt;&lt;p&gt;The spir...</div>
<div class="t" style="top:424.37px;font-size:12.2px;color:#6ac36a;left:714.00px;">(NULL)</div>
<div class="t" style="top:423.70px;font-size:13px;color:#008000;left:1015.00px;">&lt;p&gt;Last few years the awareness of consumer...</div>
<div class="t" style="top:424.37px;font-size:12.2px;color:#6ac36a;left:1314.00px;">(NULL)</div>
<div class="t" style="top:444.44px;font-size:13.3px;color:#0000ff;font-weight:bold;right:1453.00px;">56</div>
<div class="t" style="top:444.53px;font-size:13.2px;color:#0000ff;right:1359.50px;">3</div>
<div class="t" style="top:444.53px;font-size:13.2px;color:#0000ff;right:1246.00px;">240</div>
<div class="t" style="top:444.53px;font-size:13.2px;color:#0000ff;right:1176.40px;">55</div>
<div class="t" style="top:444.70px;font-size:13px;color:#008000;left:347.30px;">name</div>
<div class="t" style="top:444.70px;font-size:13px;color:#008000;left:415.00px;">&lt;h3&gt;CX&lt;/h3&gt;</div>
<div class="t" style="top:445.37px;font-size:12.2px;color:#6ac36a;left:714.00px;">(NULL)</div>
<div class="t" style="top:444.70px;font-size:13px;color:#008000;left:1015.00px;">&lt;ul&gt;&lt;li&gt;CX design&lt;/li&gt;&lt;li&gt;Unific...</div>
<div class="t" style="top:445.37px;font-size:12.2px;color:#6ac36a;left:1314.00px;">(NULL)</div>
<div class="t" style="top:465.44px;font-size:13.3px;color:#0000ff;font-weight:bold;right:1453.00px;">60</div>
<div class="t" style="top:465.53px;font-size:13.2px;color:#0000ff;right:1359.50px;">3</div>
<div class="t" style="top:465.53px;font-size:13.2px;color:#0000ff;right:1246.00px;">238</div>
<div class="t" style="top:465.53px;font-size:13.2px;color:#0000ff;right:1176.40px;">59</div>
<div class="t" style="top:465.70px;font-size:13px;color:#008000;left:347.30px;">name</div>
<div class="t" style="top:465.70px;font-size:13px;color:#008000;left:415.00px;">&lt;h3&gt;Communication&lt;/h3&gt;</div>
<div class="t" style="top:466.37px;font-size:12.2px;color:#6ac36a;left:714.00px;">(NULL)</div>
<div class="t" style="top:465.70px;font-size:13px;color:#008000;left:1015.00px;">&lt;ul&gt;&lt;li&gt;In store communication&lt;/li&gt;...</div>
<div class="t" style="top:466.37px;font-size:12.2px;color:#6ac36a;left:1314.00px;">(NULL)</div>
<div class="t" style="top:486.44px;font-size:13.3px;color:#0000ff;font-weight:bold;right:1453.00px;">6</div>
<div class="t" style="top:486.53px;font-size:13.2px;color:#0000ff;right:1359.50px;">1</div>
<div class="t" style="top:486.53px;font-size:13.2px;color:#0000ff;right:1246.00px;">176</div>
<div class="t" style="top:486.53px;font-size:13.2px;color:#0000ff;right:1176.40px;">5</div>
<div class="t" style="top:486.70px;font-size:13px;color:#008000;left:347.30px;">name</div>
<div class="t" style="top:486.70px;font-size:13px;color:#008000;left:415.00px;">&lt;h3&gt;CANDY KINGDOM&lt;/h3&gt;&lt;p&gt;The ...</div>
<div class="t" style="top:487.37px;font-size:12.2px;color:#6ac36a;left:714.00px;">(NULL)</div>
<div class="t" style="top:486.70px;font-size:13px;color:#008000;left:1015.00px;">&lt;p&gt;Last few years the awareness of consumer...</div>
<div class="t" style="top:487.37px;font-size:12.2px;color:#6ac36a;left:1314.00px;">(NULL)</div>
<div class="t" style="top:507.44px;font-size:13.3px;color:#0000ff;font-weight:bold;right:1453.00px;">68</div>
<div class="t" style="top:507.53px;font-size:13.2px;color:#0000ff;right:1359.50px;">2</div>
<div class="t" style="top:507.53px;font-size:13.2px;color:#0000ff;right:1246.00px;">177</div>
<div class="t" style="top:507.53px;font-size:13.2px;color:#0000ff;right:1176.40px;">67</div>
<div class="t" style="top:507.70px;font-size:13px;color:#008000;left:347.30px;">name</div>
<div class="t" style="top:507.70px;font-size:13px;color:#008000;left:415.00px;">&lt;h3&gt;Big Ideas can&lt;br /&gt;light up the&lt;br /...</div>
<div class="t" style="top:508.37px;font-size:12.2px;color:#6ac36a;left:714.00px;">(NULL)</div>
<div class="t" style="top:507.70px;font-size:13px;color:#008000;left:1015.00px;">&lt;p&gt;Speccon is all about collaboration and shari...</div>
<div class="t" style="top:508.37px;font-size:12.2px;color:#6ac36a;left:1314.00px;">(NULL)</div>
<div class="t" style="top:528.44px;font-size:13.3px;color:#0000ff;font-weight:bold;right:1453.00px;">149</div>
<div class="t" style="top:528.53px;font-size:13.2px;color:#0000ff;right:1359.50px;">2</div>
<div class="t" style="top:528.53px;font-size:13.2px;color:#0000ff;right:1246.00px;">178</div>
<div class="t" style="top:528.53px;font-size:13.2px;color:#0000ff;right:1176.40px;">147</div>
<div class="t" style="top:528.70px;font-size:13px;color:#008000;left:347.30px;">name</div>
<div class="t" style="top:528.70px;font-size:13px;color:#008000;left:415.00px;">&lt;h3&gt;Big Ideas can&lt;br /&gt;light up the&lt;br /...</div>
<div class="t" style="top:529.37px;font-size:12.2px;color:#6ac36a;left:714.00px;">(NULL)</div>
<div class="t" style="top:528.70px;font-size:13px;color:#008000;left:1015.00px;">&lt;p&gt;Speccon is all about collaboration and shari...</div>
<div class="t" style="top:529.37px;font-size:12.2px;color:#6ac36a;left:1314.00px;">(NULL)</div>
<div class="t" style="top:549.44px;font-size:13.3px;color:#0000ff;font-weight:bold;right:1453.00px;">150</div>
<div class="t" style="top:549.53px;font-size:13.2px;color:#0000ff;right:1359.50px;">2</div>
<div class="t" style="top:549.53px;font-size:13.2px;color:#0000ff;right:1246.00px;">179</div>
<div class="t" style="top:549.53px;font-size:13.2px;color:#0000ff;right:1176.40px;">148</div>
<div class="t" style="top:549.70px;font-size:13px;color:#008000;left:347.30px;">name</div>
<div class="t" style="top:549.70px;font-size:13px;color:#008000;left:415.00px;">&lt;h3&gt;Big Ideas can&lt;br /&gt;light up the&lt;br /...</div>
<div class="t" style="top:550.37px;font-size:12.2px;color:#6ac36a;left:714.00px;">(NULL)</div>
<div class="t" style="top:549.70px;font-size:13px;color:#008000;left:1015.00px;">&lt;p&gt;Speccon is all about collaboration and shari...</div>
<div class="t" style="top:550.37px;font-size:12.2px;color:#6ac36a;left:1314.00px;">(NULL)</div>
<div class="t" style="top:570.44px;font-size:13.3px;color:#0000ff;font-weight:bold;right:1453.00px;">152</div>
<div class="t" style="top:570.53px;font-size:13.2px;color:#0000ff;right:1359.50px;">2</div>
<div class="t" style="top:570.53px;font-size:13.2px;color:#0000ff;right:1246.00px;">180</div>
<div class="t" style="top:570.53px;font-size:13.2px;color:#0000ff;right:1176.40px;">151</div>
<div class="t" style="top:570.70px;font-size:13px;color:#008000;left:347.30px;">name</div>
<div class="t" style="top:570.70px;font-size:13px;color:#008000;left:415.00px;">&lt;h3&gt;Big Ideas can&lt;br /&gt;light up the&lt;br /...</div>
<div class="t" style="top:571.37px;font-size:12.2px;color:#6ac36a;left:714.00px;">(NULL)</div>
<div class="t" style="top:570.70px;font-size:13px;color:#008000;left:1015.00px;">&lt;p&gt;Speccon is all about collaboration and ...</div>
<div class="t" style="top:571.37px;font-size:12.2px;color:#6ac36a;left:1314.00px;">(NULL)</div>
<div class="t" style="top:591.44px;font-size:13.3px;color:#0000ff;font-weight:bold;right:1453.00px;">64</div>
<div class="t" style="top:591.53px;font-size:13.2px;color:#0000ff;right:1359.50px;">3</div>
<div class="t" style="top:591.53px;font-size:13.2px;color:#0000ff;right:1246.00px;">236</div>
<div class="t" style="top:591.53px;font-size:13.2px;color:#0000ff;right:1176.40px;">63</div>
<div class="t" style="top:591.70px;font-size:13px;color:#008000;left:347.30px;">name</div>
<div class="t" style="top:591.70px;font-size:13px;color:#008000;left:415.00px;">&lt;h3&gt;Assortment&lt;/h3&gt;</div>
<div class="t" style="top:592.37px;font-size:12.2px;color:#6ac36a;left:714.00px;">(NULL)</div>
<div class="t" style="top:591.70px;font-size:13px;color:#008000;left:1015.00px;">&lt;ul&gt;&lt;li&gt;Layout and technology&lt;/li&gt;...</div>
<div class="t" style="top:592.37px;font-size:12.2px;color:#6ac36a;left:1314.00px;">(NULL)</div>
<div class="t" style="top:612.44px;font-size:13.3px;color:#0000ff;font-weight:bold;right:1453.00px;">70</div>
<div class="t" style="top:612.53px;font-size:13.2px;color:#0000ff;right:1359.50px;">5</div>
<div class="t" style="top:612.53px;font-size:13.2px;color:#0000ff;right:1246.00px;">235</div>
<div class="t" style="top:612.53px;font-size:13.2px;color:#0000ff;right:1176.40px;">69</div>
<div class="t" style="top:612.70px;font-size:13px;color:#008000;left:347.30px;">name</div>
<div class="t" style="top:613.37px;font-size:12.2px;color:#6ac36a;left:714.00px;">(NULL)</div>
<div class="t" style="top:613.37px;font-size:12.2px;color:#6ac36a;left:1314.00px;">(NULL)</div>
<div class="t" style="top:633.44px;font-size:13.3px;color:#0000ff;font-weight:bold;right:1453.00px;">72</div>
<div class="t" style="top:633.53px;font-size:13.2px;color:#0000ff;right:1359.50px;">5</div>
<div class="t" style="top:633.53px;font-size:13.2px;color:#0000ff;right:1246.00px;">234</div>
<div class="t" style="top:633.53px;font-size:13.2px;color:#0000ff;right:1176.40px;">71</div>
<div class="t" style="top:633.70px;font-size:13px;color:#008000;left:347.30px;">name</div>
<div class="t" style="top:634.37px;font-size:12.2px;color:#6ac36a;left:714.00px;">(NULL)</div>
<div class="t" style="top:634.37px;font-size:12.2px;color:#6ac36a;left:1314.00px;">(NULL)</div>
<div class="t" style="top:654.44px;font-size:13.3px;color:#0000ff;font-weight:bold;right:1453.00px;">74</div>
<div class="t" style="top:654.53px;font-size:13.2px;color:#0000ff;right:1359.50px;">5</div>
<div class="t" style="top:654.53px;font-size:13.2px;color:#0000ff;right:1246.00px;">233</div>
<div class="t" style="top:654.53px;font-size:13.2px;color:#0000ff;right:1176.40px;">73</div>
<div class="t" style="top:654.70px;font-size:13px;color:#008000;left:347.30px;">name</div>
<div class="t" style="top:655.37px;font-size:12.2px;color:#6ac36a;left:714.00px;">(NULL)</div>
<div class="t" style="top:655.37px;font-size:12.2px;color:#6ac36a;left:1314.00px;">(NULL)</div>
<div class="t" style="top:675.44px;font-size:13.3px;color:#0000ff;font-weight:bold;right:1453.00px;">76</div>
<div class="t" style="top:675.53px;font-size:13.2px;color:#0000ff;right:1359.50px;">5</div>
<div class="t" style="top:675.53px;font-size:13.2px;color:#0000ff;right:1246.00px;">232</div>
<div class="t" style="top:675.53px;font-size:13.2px;color:#0000ff;right:1176.40px;">75</div>
<div class="t" style="top:675.70px;font-size:13px;color:#008000;left:347.30px;">name</div>
<div class="t" style="top:676.37px;font-size:12.2px;color:#6ac36a;left:714.00px;">(NULL)</div>
<div class="t" style="top:676.37px;font-size:12.2px;color:#6ac36a;left:1314.00px;">(NULL)</div>
</div>
<div class="a" style="left:3813px;top:165px;width:21px;height:680px;background:#e8e8e8;"></div>
<div class="a" style="left:3813px;top:165px;width:21px;height:21px;background:#fff;border:1px solid #bdbdbd"></div>
<div class="a" style="left:3813px;top:185px;width:21px;height:154px;background:#fff;border:1px solid #bdbdbd"></div>
<div class="a" style="left:3813px;top:824px;width:21px;height:21px;background:#fff;border:1px solid #bdbdbd"></div>
<div class="a" style="left:2305px;top:845px;width:1508px;height:21px;background:#e8e8e8;"></div>
<div class="a" style="left:2305px;top:845px;width:21px;height:21px;background:#fff;border:1px solid #bdbdbd"></div>
<div class="a" style="left:2325px;top:845px;width:359px;height:21px;background:#fff;border:1px solid #bdbdbd"></div>
<div class="a" style="left:3792px;top:845px;width:21px;height:21px;background:#fff;border:1px solid #bdbdbd"></div>
<div class="a" style="left:3813px;top:845px;width:21px;height:21px;background:#e8e8e8;"></div>
<svg style="left:0;top:0" width="1" height="1"><path d="M3819.5 178.5h8l-4-4.5z" fill="#606060"/><path d="M3819.5 832h8l-4 4.5z" fill="#606060"/><path d="M2318 851.5v8l-4.5-4z" fill="#606060"/><path d="M3800 851.5v8l4.5-4z" fill="#606060"/></svg>
<div class="a" style="left:1921px;top:877px;width:1918px;height:131px;background:#fff;border:1px solid #d6d6d6"></div>
<div class="a" style="left:1922px;top:878px;width:1895px;height:129px;overflow:hidden;font-family:'Liberation Mono',monospace;font-size:13.33px;line-height:18px;white-space:pre">
<div class="t" style="left:17.5px;top:3.93px;color:#9a9a9a;font-family:inherit;transform:scaleY(1.16);transform-origin:0 10.3px">35</div><div class="t" style="left:38.4px;top:3.93px;color:#000;font-family:inherit;white-space:pre;transform:scaleY(1.16);transform-origin:0 10.3px"><b style="color:#0000ff">SELECT</b>  <span style="color:#808000">`id`</span><span style="color:#0000ff">,</span>  <span style="color:#808000">`category_id`</span><span style="color:#0000ff">,</span>  <span style="color:#808000">`subcategory_id`</span><span style="color:#0000ff">,</span>  <span style="color:#808000">`lang_id`</span><span style="color:#0000ff">,</span>  <b style="color:#000080">LEFT</b><span style="color:#0000ff">(</span><span style="color:#808000">`name`</span><span style="color:#0000ff">,</span> <span style="color:#800080">256</span><span style="color:#0000ff">),</span>  <b style="color:#000080">LEFT</b><span style="color:#0000ff">(</span><span style="color:#808000">`title`</span><span style="color:#0000ff">,</span> <span style="color:#800080">256</span><span style="color:#0000ff">),</span>  <b style="color:#000080">LEFT</b><span style="color:#0000ff">(</span><span style="color:#808000">`title_rs`</span><span style="color:#0000ff">,</span> <span style="color:#800080">256</span><span style="color:#0000ff">),</span>  <b style="color:#000080">LEFT</b><span style="color:#0000ff">(</span><span style="color:#808000">`text`</span><span style="color:#0000ff">,</span> <span style="color:#800080">256</span><span style="color:#0000ff">),</span>  <b style="color:#000080">LEFT</b><span style="color:#0000ff">(</span><span style="color:#808000">`text_rs`</span><span style="color:#0000ff">,</span> <span style="color:#800080">256</span><span style="color:#0000ff">),</span>  <b style="color:#000080">LEFT</b><span style="color:#0000ff">(</span><span style="color:#808000">`content_text`</span><span style="color:#0000ff">,</span> <span style="color:#800080">256</span><span style="color:#0000ff">),</span>  <b style="color:#000080">LEFT</b><span style="color:#0000ff">(</span><span style="color:#808000">`content_text_rs`</span><span style="color:#0000ff">,</span> <span style="color:#800080">256</span><span style="color:#0000ff">),</span>  <b style="color:#000080">LEFT</b><span style="color:#0000ff">(</span><span style="color:#808000">`author_info`</span><span style="color:#0000ff">,</span> <span style="color:#800080">256</span><span style="color:#0000ff">),</span>  <b style="color:#000080">LEFT</b><span style="color:#0000ff">(</span><span style="color:#808000">`author_info_rs`</span><span style="color:#0000ff">,</span> <span style="color:#800080">256</span><span style="color:#0000ff">),</span>  </div>
<div class="t" style="left:17.5px;top:21.93px;color:#9a9a9a;font-family:inherit;transform:scaleY(1.16);transform-origin:0 10.3px">36</div><div class="t" style="left:38.4px;top:21.93px;color:#000;font-family:inherit;white-space:pre;transform:scaleY(1.16);transform-origin:0 10.3px"><b style="color:#0000ff">SHOW</b> <b style="color:#0000ff">CREATE</b> <b style="color:#0000ff">TABLE</b> <span style="color:#808000">`sidera`</span><span style="color:#0000ff">.</span><span style="color:#808000">`pages`</span><span style="color:#0000ff">;</span></div>
<div class="t" style="left:17.5px;top:39.93px;color:#9a9a9a;font-family:inherit;transform:scaleY(1.16);transform-origin:0 10.3px">37</div><div class="t" style="left:38.4px;top:39.93px;color:#000;font-family:inherit;white-space:pre;transform:scaleY(1.16);transform-origin:0 10.3px"><b style="color:#0000ff">SELECT</b>  <span style="color:#808000">`id`</span><span style="color:#0000ff">,</span>  <span style="color:#808000">`category_id`</span><span style="color:#0000ff">,</span>  <span style="color:#808000">`subcategory_id`</span><span style="color:#0000ff">,</span>  <span style="color:#808000">`lang_id`</span><span style="color:#0000ff">,</span>  <b style="color:#000080">LEFT</b><span style="color:#0000ff">(</span><span style="color:#808000">`name`</span><span style="color:#0000ff">,</span> <span style="color:#800080">256</span><span style="color:#0000ff">),</span>  <b style="color:#000080">LEFT</b><span style="color:#0000ff">(</span><span style="color:#808000">`title`</span><span style="color:#0000ff">,</span> <span style="color:#800080">256</span><span style="color:#0000ff">),</span>  <b style="color:#000080">LEFT</b><span style="color:#0000ff">(</span><span style="color:#808000">`title_rs`</span><span style="color:#0000ff">,</span> <span style="color:#800080">256</span><span style="color:#0000ff">),</span>  <b style="color:#000080">LEFT</b><span style="color:#0000ff">(</span><span style="color:#808000">`text`</span><span style="color:#0000ff">,</span> <span style="color:#800080">256</span><span style="color:#0000ff">),</span>  <b style="color:#000080">LEFT</b><span style="color:#0000ff">(</span><span style="color:#808000">`text_rs`</span><span style="color:#0000ff">,</span> <span style="color:#800080">256</span><span style="color:#0000ff">),</span>  <b style="color:#000080">LEFT</b><span style="color:#0000ff">(</span><span style="color:#808000">`content_text`</span><span style="color:#0000ff">,</span> <span style="color:#800080">256</span><span style="color:#0000ff">),</span>  <b style="color:#000080">LEFT</b><span style="color:#0000ff">(</span><span style="color:#808000">`content_text_rs`</span><span style="color:#0000ff">,</span> <span style="color:#800080">256</span><span style="color:#0000ff">),</span>  <b style="color:#000080">LEFT</b><span style="color:#0000ff">(</span><span style="color:#808000">`author_info`</span><span style="color:#0000ff">,</span> <span style="color:#800080">256</span><span style="color:#0000ff">),</span>  <b style="color:#000080">LEFT</b><span style="color:#0000ff">(</span><span style="color:#808000">`author_info_rs`</span><span style="color:#0000ff">,</span> <span style="color:#800080">256</span><span style="color:#0000ff">),</span>  </div>
<div class="t" style="left:17.5px;top:57.93px;color:#9a9a9a;font-family:inherit;transform:scaleY(1.16);transform-origin:0 10.3px">38</div><div class="t" style="left:38.4px;top:57.93px;color:#000;font-family:inherit;white-space:pre;transform:scaleY(1.16);transform-origin:0 10.3px"><b style="color:#0000ff">SHOW</b> <b style="color:#0000ff">CREATE</b> <b style="color:#0000ff">TABLE</b> <span style="color:#808000">`sidera`</span><span style="color:#0000ff">.</span><span style="color:#808000">`pages`</span><span style="color:#0000ff">;</span></div>
<div class="t" style="left:17.5px;top:75.93px;color:#9a9a9a;font-family:inherit;transform:scaleY(1.16);transform-origin:0 10.3px">39</div><div class="t" style="left:38.4px;top:75.93px;color:#000;font-family:inherit;white-space:pre;transform:scaleY(1.16);transform-origin:0 10.3px"><b style="color:#0000ff">SELECT</b>  <span style="color:#808000">`id`</span><span style="color:#0000ff">,</span>  <span style="color:#808000">`category_id`</span><span style="color:#0000ff">,</span>  <span style="color:#808000">`subcategory_id`</span><span style="color:#0000ff">,</span>  <span style="color:#808000">`lang_id`</span><span style="color:#0000ff">,</span>  <b style="color:#000080">LEFT</b><span style="color:#0000ff">(</span><span style="color:#808000">`name`</span><span style="color:#0000ff">,</span> <span style="color:#800080">256</span><span style="color:#0000ff">),</span>  <b style="color:#000080">LEFT</b><span style="color:#0000ff">(</span><span style="color:#808000">`title`</span><span style="color:#0000ff">,</span> <span style="color:#800080">256</span><span style="color:#0000ff">),</span>  <b style="color:#000080">LEFT</b><span style="color:#0000ff">(</span><span style="color:#808000">`title_rs`</span><span style="color:#0000ff">,</span> <span style="color:#800080">256</span><span style="color:#0000ff">),</span>  <b style="color:#000080">LEFT</b><span style="color:#0000ff">(</span><span style="color:#808000">`text`</span><span style="color:#0000ff">,</span> <span style="color:#800080">256</span><span style="color:#0000ff">),</span>  <b style="color:#000080">LEFT</b><span style="color:#0000ff">(</span><span style="color:#808000">`text_rs`</span><span style="color:#0000ff">,</span> <span style="color:#800080">256</span><span style="color:#0000ff">),</span>  <b style="color:#000080">LEFT</b><span style="color:#0000ff">(</span><span style="color:#808000">`content_text`</span><span style="color:#0000ff">,</span> <span style="color:#800080">256</span><span style="color:#0000ff">),</span>  <b style="color:#000080">LEFT</b><span style="color:#0000ff">(</span><span style="color:#808000">`content_text_rs`</span><span style="color:#0000ff">,</span> <span style="color:#800080">256</span><span style="color:#0000ff">),</span>  <b style="color:#000080">LEFT</b><span style="color:#0000ff">(</span><span style="color:#808000">`author_info`</span><span style="color:#0000ff">,</span> <span style="color:#800080">256</span><span style="color:#0000ff">),</span>  <b style="color:#000080">LEFT</b><span style="color:#0000ff">(</span><span style="color:#808000">`author_info_rs`</span><span style="color:#0000ff">,</span> <span style="color:#800080">256</span><span style="color:#0000ff">),</span>  </div>
<div class="t" style="left:17.5px;top:93.93px;color:#9a9a9a;font-family:inherit;transform:scaleY(1.16);transform-origin:0 10.3px">40</div><div class="t" style="left:38.4px;top:93.93px;color:#000;font-family:inherit;white-space:pre;transform:scaleY(1.16);transform-origin:0 10.3px"><b style="color:#0000ff">SHOW</b> <b style="color:#0000ff">CREATE</b> <b style="color:#0000ff">TABLE</b> <span style="color:#808000">`sidera`</span><span style="color:#0000ff">.</span><span style="color:#808000">`pages`</span><span style="color:#0000ff">;</span></div>
<div class="t" style="left:17.5px;top:111.93px;color:#9a9a9a;font-family:inherit;transform:scaleY(1.16);transform-origin:0 10.3px">41</div><div class="t" style="left:38.4px;top:111.93px;color:#000;font-family:inherit;white-space:pre;transform:scaleY(1.16);transform-origin:0 10.3px"><b style="color:#0000ff">SELECT</b> <span style="color:#808000">`id`</span><span style="color:#0000ff">,</span> <span style="color:#808000">`category_id`</span><span style="color:#0000ff">,</span> <span style="color:#808000">`subcategory_id`</span><span style="color:#0000ff">,</span> <span style="color:#808000">`lang_id`</span><span style="color:#0000ff">,</span> <span style="color:#808000">`name`</span><span style="color:#0000ff">,</span> <span style="color:#808000">`title`</span><span style="color:#0000ff">,</span> <span style="color:#808000">`title_rs`</span><span style="color:#0000ff">,</span> <span style="color:#808000">`text`</span><span style="color:#0000ff">,</span> <span style="color:#808000">`text_rs`</span><span style="color:#0000ff">,</span> <span style="color:#808000">`content_text`</span><span style="color:#0000ff">,</span> <span style="color:#808000">`content_text_rs`</span><span style="color:#0000ff">,</span> <span style="color:#808000">`galery_link`</span><span style="color:#0000ff">,</span> <span style="color:#808000">`author_info`</span><span style="color:#0000ff">,</span> <span style="color:#808000">`author_info_rs`</span><span style="color:#0000ff">,</span> <span style="color:#808000">`author_text`</span><span style="color:#0000ff">,</span> <span style="color:#808000">`author_text_rs`</span><span style="color:#0000ff">,</span> <span style="color:#808000">`additional_info`</span><span style="color:#0000ff">,</span></div>
</div>
<div class="a" style="left:3817px;top:878px;width:21px;height:128px;background:#e8e8e8;"></div>
<div class="a" style="left:3817px;top:878px;width:21px;height:21px;background:#fff;border:1px solid #bdbdbd"></div>
<div class="a" style="left:3817px;top:964px;width:21px;height:21px;background:#fff;border:1px solid #bdbdbd"></div>
<div class="a" style="left:3817px;top:984px;width:21px;height:21px;background:#fff;border:1px solid #bdbdbd"></div>
<svg style="left:0;top:0" width="1" height="1"><path d="M3823.5 891h8l-4-4.5z" fill="#606060"/><path d="M3823.5 993h8l-4 4.5z" fill="#606060"/></svg>
<div class="a" style="left:1920px;top:1008px;width:1920px;height:24px;background:#f7f7f7;"></div>
<div class="a" style="left:2879px;top:1011px;width:1px;height:20px;background:#d2d2d2;"></div>
<div class="a" style="left:2989px;top:1011px;width:1px;height:20px;background:#d2d2d2;"></div>
<div class="a" style="left:3449px;top:1011px;width:1px;height:20px;background:#d2d2d2;"></div>
<svg style="left:0;top:0" width="1" height="1"><circle cx="3003" cy="1021" r="8.5" fill="#dfe8f3" stroke="#8a98a8" stroke-width="1.5"/><path d="M3003 1015.5v5.5l3 2" fill="none" stroke="#4a5a6a" stroke-width="1.2"/><path d="M3134 1011c4-1 8 1 10 5 2 3 3 6 6 8l2 2-3-.5c-2 0-3-1-4-2-2-3-4-4-6-6-2-2-4-4-5-6z" fill="none" stroke="#7c8d99" stroke-width="1.2"/><circle cx="3463" cy="1021.5" r="8.5" fill="#dfe8f3" stroke="#3d8fd8" stroke-width="1.8"/><path d="M3455 1013l3-2M3471 1013l-3-2" stroke="#3d8fd8" stroke-width="1.8"/><path d="M3463 1016v5.5l3 2" fill="none" stroke="#4a5a6a" stroke-width="1.2"/><circle cx="3604" cy="1021" r="3.8" fill="#6cc46c" stroke="#3a9a3a" stroke-width="1"/></svg>
<div class="t" style="top:1014.40px;font-size:14.3px;color:#000;left:3015.00px;">Connected: 00:29</div>
<div class="a" style="left:3155px;top:1008px;width:148px;height:24px;overflow:hidden"><div class="t" style="top:6.40px;font-size:14.3px;color:#000;left:0.00px;">MariaDB or MySQL 8.0</div>
</div>
<div class="t" style="top:1014.73px;font-size:13.9px;color:#000;left:3303.00px;">Uptime: 3 days, 23:42 |</div>
<div class="a" style="left:3476px;top:1008px;width:116px;height:24px;overflow:hidden"><div class="t" style="top:6.40px;font-size:14.3px;color:#000;left:0.00px;">Server time: 1:13 PM</div>
</div>
<div class="t" style="top:1014.23px;font-size:14.5px;color:#000;left:3615.30px;">Idle.</div>
<div class="a" style="left:1920px;top:1032px;width:1920px;height:48px;background:linear-gradient(90deg,#19222b 0,#1a232b 420px,#1b242b 700px,#202325 900px,#232323 1000px,#232323 100%);"></div>
<svg style="left:1920px;top:1032px" width="60" height="48"><circle cx="35.5" cy="20" r="6" fill="#f7a21d"/><path d="M22 34a6.5 6.5 0 0 1 1.5-12.5 8.5 8.5 0 0 1 16 1.5 5.5 5.5 0 0 1 4 10.5z" fill="#c7d5f3"/><path d="M21 34a6 6 0 0 1 1-6h20a5 5 0 0 1 1 6z" fill="#dde6fa"/></svg>
<div class="t" style="top:1042.70px;font-size:11.1px;color:#fff;left:1970.50px;">26°C</div>
<div class="t" style="top:1057.50px;font-size:12.4px;color:#cfcfcf;left:1970.30px;">Mostly cloudy</div>
<svg style="left:2317px;top:1044.5px" width="23.5" height="23.5"><defs><linearGradient id="wg2317" x1="0" y1="0" x2="1" y2="1"><stop offset="0" stop-color="#6ee3fb"/><stop offset="1" stop-color="#0b8ae8"/></linearGradient></defs><path d="M1 0h9.75v10.75H0V1z M12.75 0h9.75l1 1v9.75h-10.75z M0 12.75h10.75v10.75H1l-1-1z M12.75 12.75h10.75v9.75l-1 1h-9.75z" fill="url(#wg2317)"/></svg>
<div class="a" style="left:2354px;top:1041px;width:218px;height:30px;border-radius:15.0px;background:#f0f2f3"></div>
<svg style="left:2354px;top:1041px" width="218" height="30"><circle cx="16.5" cy="14.1" r="5.1000000000000005" fill="none" stroke="#1f1f1f" stroke-width="1.65"/><path d="M20.1 18.0l4.5 4.5" stroke="#1f1f1f" stroke-width="2.1" stroke-linecap="round"/><g transform="translate(189.5 4.5) scale(0.7894736842105263)"><circle cx="13" cy="12.5" r="11.5" fill="#fff" stroke="#2b7de9" stroke-width="2.2"/><path d="M2 20l-1 6 6-3" fill="#2b7de9"/><path d="M9 5v13l6-3.5-3.5-1.5" fill="none" stroke="#1d5fcf" stroke-width="3" stroke-linejoin="round"/><path d="M12 9l5 2" stroke="#3fb8f0" stroke-width="2.5"/></g></svg>
<div class="t" style="left:2390.5px;top:1049.2px;font-size:13.5px;color:#5b5b5b">Search</div>
<div class="a" style="left:3017px;top:1036px;width:40px;height:40px;background:#2e2e2e;border-radius:4px;border:1px solid #363636"></div>
<svg style="left:2584.0px;top:1044px" width="24" height="24"><g transform="scale(0.8000)"><circle cx="16" cy="14.5" r="13.5" fill="#6d6fd0"/><path d="M4 24 L2.5 29.5 L9 26Z" fill="#6d6fd0"/><rect x="8.5" y="10" width="12" height="10" rx="2" fill="#fff"/><path d="M21 13.5l4.5-2.5v9l-4.5-2.5z" fill="#fff"/></g></svg>
<svg style="left:2628.0px;top:1044px" width="24" height="24"><g transform="scale(0.8000)"><rect x="9" y="1" width="20" height="28" rx="2" fill="#21a366"/><rect x="9" y="1" width="20" height="9.5" fill="#33c481"/><rect x="9" y="19.5" width="20" height="9.5" fill="#107c41"/><rect x="19" y="10.5" width="10" height="9" fill="#185c37" opacity=".5"/><rect x="1" y="7" width="15" height="16" rx="1.5" fill="#107c41"/><path d="M5 11l7 8M12 11l-7 8" stroke="#fff" stroke-width="2"/></g></svg>
<svg style="left:2672.0px;top:1044px" width="24" height="24"><g transform="scale(0.8000)"><rect x="1" y="3" width="28" height="19" rx="1" fill="#37bff0"/><rect x="1" y="3" width="28" height="19" rx="1" fill="none" stroke="#2a9fd0" stroke-width=".8"/><rect x="13" y="22" width="4" height="4" fill="#8a8f94"/><rect x="9" y="26" width="12" height="2" fill="#8a8f94"/></g></svg>
<svg style="left:2716.1px;top:1044px" width="24" height="24"><g transform="scale(0.8000)"><path d="M1 4h10l3 3h15v20H1z" fill="#e8a70e"/><rect x="1" y="8" width="29" height="20" rx="1" fill="#ffd35c"/><rect x="9" y="18" width="16" height="10" rx="2" fill="#1a86d8"/><rect x="12" y="21" width="10" height="2" fill="#0f5fa8"/></g></svg>
<svg style="left:2760.1px;top:1044px" width="24" height="24"><g transform="scale(0.8000)"><circle cx="15" cy="16" r="13" fill="#ff7139"/><path d="M15 3c6 0 13 5 13 13S22 29 15 29C8 29 2 24 2 16c2 6 8 9 13 8 5-1 8-5 7-10-1-4-5-6-8-5 3-3 2-6 1-6z" fill="#ffb21e"/><circle cx="15" cy="16" r="7" fill="#9059ff"/><path d="M22 2c4 3 6 7 6 11-2-4-4-6-6-7z" fill="#ffd567"/></g></svg>
<svg style="left:2804.1px;top:1044px" width="24" height="24"><g transform="scale(0.8000)"><rect x="0" y="0" width="30" height="30" rx="2" fill="#0e8ee9"/><circle cx="15" cy="15" r="11.5" fill="#fff"/><path d="M4.5 15l6-4.5v3h9v-3l6 4.5-6 4.5v-3h-9v3z" fill="#0e8ee9"/></g></svg>
<svg style="left:2848.1px;top:1044px" width="24" height="24"><g transform="scale(0.8000)"><rect x="0" y="0" width="30" height="30" fill="#ef443b"/><path d="M5 15l6-6 6 6-6 6z" fill="#fff"/><path d="M15 9l6 6-6 6 2 0 6-6-6-6z" fill="#fff"/><path d="M18.5 9l6 6-6 6" fill="none" stroke="#fff" stroke-width="2"/></g></svg>
<svg style="left:2892.1px;top:1044px" width="24" height="24"><g transform="scale(0.8000)"><path d="M15 1c8 0 13 4 13 14s-5 14-13 14S2 25 2 15 7 1 15 1z" fill="none" stroke="#e5249a" stroke-width="3.5"/><path d="M8.5 9v8c0 4 2.5 6 6.5 6s6.5-2 6.5-6V9M15 11v10" fill="none" stroke="#e5249a" stroke-width="3"/><path d="M0 15h6M24 15h6" stroke="#232323" stroke-width="2.5"/></g></svg>
<svg style="left:2936.2px;top:1044px" width="24" height="24"><g transform="scale(0.8000)"><path d="M2 4l11-3 16 5-3 22-12 2L1 20z" fill="#b74af7"/><path d="M20 1l9 6-5 12z" fill="#ff318c"/><rect x="6" y="6" width="18" height="18" fill="#000"/><text x="8" y="16" font-family="Liberation Sans" font-weight="bold" font-size="9" fill="#fff">PS</text><rect x="8" y="20" width="6" height="1.5" fill="#fff"/></g></svg>
<svg style="left:2980.2px;top:1044px" width="24" height="24"><g transform="scale(0.8000)"><rect x="9" y="2" width="20" height="26" rx="2" fill="#0a64c8"/><rect x="9" y="2" width="20" height="8" fill="#28a8ea"/><rect x="19" y="2" width="10" height="8" fill="#50d9ff"/><rect x="9" y="10" width="10" height="8" fill="#0078d4"/><rect x="19" y="10" width="10" height="8" fill="#28a8ea"/><path d="M9 15l10 7 10-7v13H9z" fill="#1490df"/><rect x="1" y="8" width="14" height="14" rx="1.5" fill="#0f6cbd"/><ellipse cx="8" cy="15" rx="3.5" ry="4.2" fill="none" stroke="#fff" stroke-width="1.8"/></g></svg>
<svg style="left:3024.2px;top:1044px" width="24" height="24"><g transform="scale(0.8000)"><circle cx="15" cy="15" r="14" fill="#db4437"/><path d="M15 15L3 8.5A14 14 0 0 0 9 27.5z" fill="#0f9d58"/><path d="M15 15h14A14 14 0 0 1 9 27.5z" fill="#ffcd40"/><path d="M15 15L3 8.5" stroke="#0f9d58" stroke-width="0"/><circle cx="15" cy="15" r="6.3" fill="#fff"/><circle cx="15" cy="15" r="5" fill="#1a73e8"/></g></svg>
<svg style="left:3068.2px;top:1044px" width="24" height="24"><g transform="scale(0.8000)"><rect x="0" y="0" width="30" height="30" rx="2" fill="#3e3e3e"/><path d="M7 9.5l16-5v6l-16 5z M7 15.5l16 5v-6l-16-5z M7 19.5l16-5v6l-16 5z" fill="#ff9800"/></g></svg>
<svg style="left:3112.2px;top:1044px" width="24" height="24"><g transform="scale(0.8000)"><rect x="3" y="4" width="22" height="24" fill="#e8f0d8" stroke="#9aa58a" stroke-width="1"/><path d="M3 4h22v4H3z" fill="#c9d6b0"/><path d="M6 12h12M6 16h10M6 20h14M6 24h8" stroke="#8fa37a" stroke-width="1"/><ellipse cx="13" cy="17" rx="7" ry="6" fill="#7dbb3a"/><path d="M20 20L28 2l1.5 1-7 18z" fill="#e0b030"/></g></svg>
<svg style="left:3156.3px;top:1044px" width="24" height="24"><g transform="scale(0.8000)"><circle cx="15" cy="15" r="14" fill="#e4e4e4"/><path d="M1 16a14 14 0 0 1 28 0z" fill="#4db32b"/><path d="M5 9a12 9 0 0 1 20 0" fill="#7dd850" opacity=".6"/><circle cx="15" cy="15" r="14" fill="none" stroke="#8a9a8a" stroke-width="1"/><rect x="6" y="8.5" width="17" height="12" rx="1" fill="#f5a623"/><text x="7.3" y="18.8" font-family="Liberation Sans" font-weight="bold" font-size="10.5" fill="#111">HS</text></g></svg>
<svg style="left:3200.3px;top:1044px" width="24" height="24"><g transform="scale(0.8000)"><rect x="0" y="0" width="30" height="30" fill="#bf0000"/><path d="M0 0h30v30H0z" fill="none" stroke="#8b0000" stroke-width="2" stroke-dasharray="2 2"/><text x="3.5" y="23" font-family="Liberation Sans" font-weight="bold" font-style="italic" font-size="18" fill="#fff">Fz</text></g></svg>
<svg style="left:3244.3px;top:1044px" width="24" height="24"><g transform="scale(0.8000)"><path d="M15 1l14 14-14 14L1 15z" fill="#4b8bf5"/><path d="M15 15h14L15 29z" fill="#f7c23c"/><path d="M15 1l14 14H15z" fill="#ea4335"/><path d="M1 15h14v14z" fill="#fbbc04" opacity=".7"/><path d="M11 5l8 8M15 9v12" stroke="#222" stroke-width="2.2"/><circle cx="15" cy="9" r="2.3" fill="#222"/><circle cx="19" cy="13" r="2.3" fill="#222"/><circle cx="15" cy="21" r="2.3" fill="#222"/></g></svg>
<svg style="left:3288.3px;top:1044px" width="24" height="24"><g transform="scale(0.8000)"><rect x="9" y="2" width="20" height="26" rx="2" fill="#185abd"/><rect x="9" y="2" width="20" height="7" fill="#41a5ee"/><rect x="9" y="9" width="20" height="7" fill="#2b7cd3"/><rect x="9" y="22" width="20" height="6" fill="#103f91"/><rect x="1" y="8" width="15" height="15" rx="1.5" fill="#185abd"/><path d="M3.5 11l2 8 2.5-6 2.5 6 2-8" fill="none" stroke="#fff" stroke-width="1.6"/></g></svg>
<svg style="left:3332.3px;top:1044px" width="24" height="24"><g transform="scale(0.8000)"><circle cx="15" cy="15" r="13.5" fill="#1da1f2"/><circle cx="7" cy="7" r="6" fill="#1da1f2"/><circle cx="23" cy="23" r="6" fill="#1da1f2"/><text x="8.5" y="22" font-family="Liberation Sans" font-weight="bold" font-size="19" fill="#fff">S</text></g></svg>
<svg style="left:3376.4px;top:1044px" width="24" height="24"><g transform="scale(0.8000)"><circle cx="15" cy="15" r="14.5" fill="#0b5cff"/><text x="15" y="17.5" text-anchor="middle" font-family="Liberation Sans" font-weight="bold" font-size="7" fill="#fff">zoom</text></g></svg>
<svg style="left:3420.4px;top:1044px" width="24" height="24"><g transform="scale(0.8000)"><circle cx="15" cy="15" r="14" fill="#e4e4e4"/><path d="M1 16a14 14 0 0 1 28 0z" fill="#4db32b"/><path d="M5 9a12 9 0 0 1 20 0" fill="#7dd850" opacity=".6"/><circle cx="15" cy="15" r="14" fill="none" stroke="#8a9a8a" stroke-width="1"/><rect x="6" y="8.5" width="17" height="12" rx="1" fill="#f5a623"/><text x="7.3" y="18.8" font-family="Liberation Sans" font-weight="bold" font-size="10.5" fill="#111">HS</text></g></svg>
<div class="a" style="left:2725px;top:1075px;width:6px;height:2.5px;background:#9a9a9a;border-radius:2px"></div>
<div class="a" style="left:2945px;top:1075px;width:6px;height:2.5px;background:#9a9a9a;border-radius:2px"></div>
<div class="a" style="left:3341px;top:1075px;width:6px;height:2.5px;background:#9a9a9a;border-radius:2px"></div>
<div class="a" style="left:3429px;top:1075px;width:6px;height:2.5px;background:#9a9a9a;border-radius:2px"></div>
<div class="a" style="left:3029px;top:1075px;width:16px;height:2.5px;background:#0a8ee8;border-radius:2px"></div>
<div class="t" style="top:1042.48px;font-size:11.6px;color:#fff;right:23.20px;">1:13 PM</div>
<div class="t" style="top:1058.23px;font-size:11.9px;color:#fff;right:23.20px;">8/15/2023</div>
</body></html>
